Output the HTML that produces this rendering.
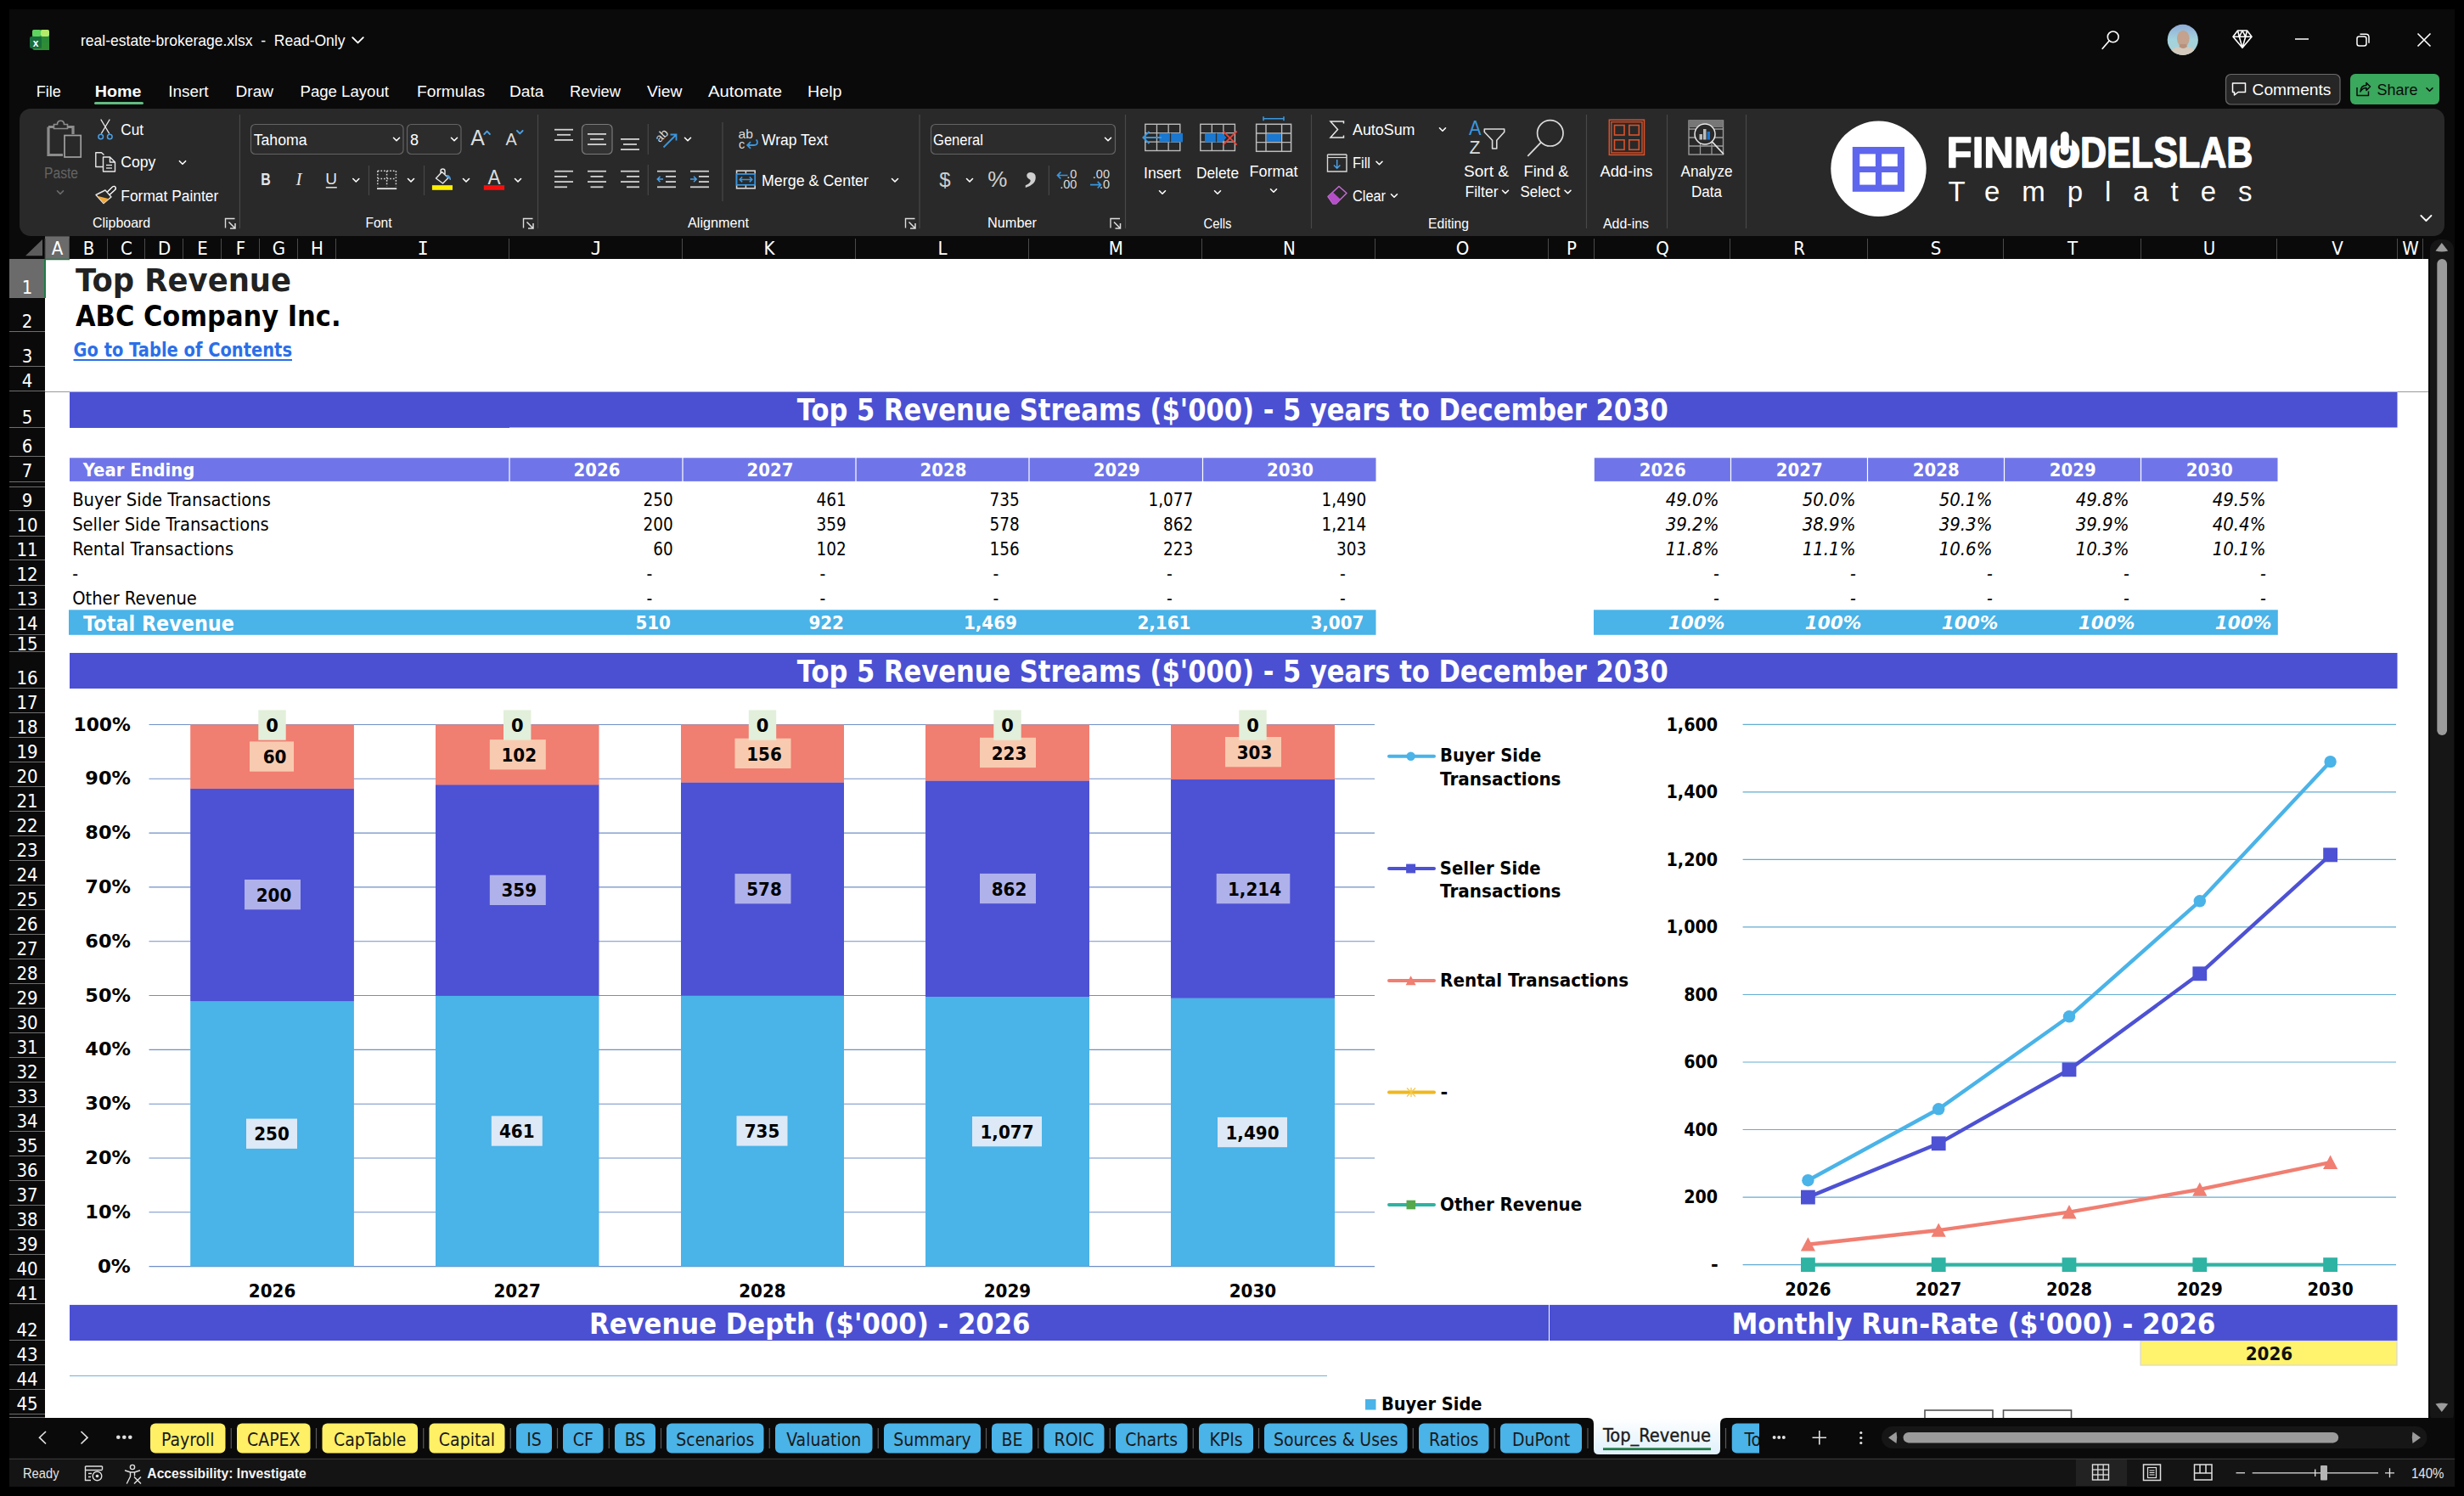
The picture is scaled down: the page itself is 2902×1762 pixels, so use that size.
<!DOCTYPE html>
<html lang="en"><head><meta charset="utf-8"><title>real-estate-brokerage.xlsx - Excel</title>
<style>
html,body{margin:0;padding:0;background:#000;width:2902px;height:1762px;overflow:hidden}
svg{display:block}
text{white-space:pre}
</style></head><body>
<svg width="2902" height="1762" viewBox="0 0 2902 1762">
<rect x="0" y="0" width="2902" height="1762" fill="#000"/>
<rect x="11" y="11" width="2880" height="1740" fill="#0a0a0a"/>
<g id="titlebar">
<rect x="38" y="35" width="20" height="24" fill="#2f8f3f" rx="3"/>
<rect x="38" y="35" width="10" height="8" fill="#5fd35f" rx="2"/>
<rect x="48" y="35" width="10" height="8" fill="#b5ea6a" rx="2"/>
<rect x="47" y="43" width="11" height="8" fill="#2a8a3a"/>
<rect x="47" y="51" width="11" height="8" fill="#2f8c35"/>
<rect x="35" y="43" width="14" height="14" fill="#176e3c" rx="2"/>
<text x="42" y="54.5" font-family='"Liberation Sans", sans-serif' font-size="12" fill="#fff" font-weight="700" text-anchor="middle">x</text>
<text x="95" y="54" font-family='"Liberation Sans", sans-serif' font-size="18.4" fill="#fff" textLength="311.5" lengthAdjust="spacingAndGlyphs">real-estate-brokerage.xlsx  -  Read-Only</text>
<path d="M415.2 44.15 L421.5 50.449999999999996 L427.8 44.15" fill="none" stroke="#fff" stroke-width="1.9" stroke-linecap="round" stroke-linejoin="round"/>
<circle cx="2488.7" cy="43.4" r="6.4" fill="none" stroke="#fff" stroke-width="1.6"/>
<line x1="2484" y1="48.3" x2="2476.2" y2="57.3" stroke="#fff" stroke-width="1.7" stroke-linecap="round"/>
<defs><linearGradient id="av" x1="0" y1="0" x2="0" y2="1"><stop offset="0" stop-color="#8fa9d6"/><stop offset="0.3" stop-color="#9cc3dc"/><stop offset="0.5" stop-color="#a3d3dc"/><stop offset="1" stop-color="#a9d2d6"/></linearGradient><clipPath id="avc"><circle cx="2570.8" cy="46.9" r="18.1"/></clipPath></defs>
<g clip-path="url(#avc)">
<rect x="2552" y="28" width="38" height="38" fill="url(#av)"/>
<path d="M2553 67 Q2556 57 2564.5 55.5 L2578 55.5 Q2586 57 2589 67 Z" fill="#d4c9bd"/>
<ellipse cx="2571.3" cy="45.5" rx="7.3" ry="9.8" fill="#c4a28d"/>
<path d="M2566.5 55 Q2571.3 59 2576 55 L2575 52 H2567.5 Z" fill="#b8917c"/>
</g>
<path d="M2630 43.3 L2635.5 36 L2646.5 36 L2652 43.3 L2641 56.3 Z M2630 43.3 L2652 43.3 M2635.5 36 L2637.3 43.3 L2641 56.3 L2644.7 43.3 L2646.5 36 M2637.3 43.3 L2641 36 L2644.7 43.3" fill="none" stroke="#fff" stroke-width="1.6" stroke-linejoin="round"/>
<line x1="2703" y1="46" x2="2719" y2="46" stroke="#fff" stroke-width="1.5" />
<rect x="2776" y="43" width="11" height="11" fill="none" rx="2.5" stroke="#fff" stroke-width="1.5"/>
<path d="M2779.5 40.2 H2786.5 Q2790 40.2 2790 43.7 V50.7" fill="none" stroke="#fff" stroke-width="1.5"/>
<path d="M2847.5 39.5 L2862.5 54.5 M2862.5 39.5 L2847.5 54.5" fill="none" stroke="#fff" stroke-width="1.6"/>
</g>
<g id="menu">
<text x="42.7" y="113.8" font-family='"Liberation Sans", sans-serif' font-size="18.7" fill="#fff" textLength="29.2" lengthAdjust="spacingAndGlyphs">File</text>
<text x="111.7" y="113.8" font-family='"Liberation Sans", sans-serif' font-size="18.7" fill="#fff" font-weight="700" textLength="54.7" lengthAdjust="spacingAndGlyphs">Home</text>
<text x="198.3" y="113.8" font-family='"Liberation Sans", sans-serif' font-size="18.7" fill="#fff" textLength="47.3" lengthAdjust="spacingAndGlyphs">Insert</text>
<text x="277.6" y="113.8" font-family='"Liberation Sans", sans-serif' font-size="18.7" fill="#fff" textLength="44.4" lengthAdjust="spacingAndGlyphs">Draw</text>
<text x="353.5" y="113.8" font-family='"Liberation Sans", sans-serif' font-size="18.7" fill="#fff" textLength="104.5" lengthAdjust="spacingAndGlyphs">Page Layout</text>
<text x="491" y="113.8" font-family='"Liberation Sans", sans-serif' font-size="18.7" fill="#fff" textLength="80" lengthAdjust="spacingAndGlyphs">Formulas</text>
<text x="600" y="113.8" font-family='"Liberation Sans", sans-serif' font-size="18.7" fill="#fff" textLength="40.5" lengthAdjust="spacingAndGlyphs">Data</text>
<text x="671" y="113.8" font-family='"Liberation Sans", sans-serif' font-size="18.7" fill="#fff" textLength="60" lengthAdjust="spacingAndGlyphs">Review</text>
<text x="762" y="113.8" font-family='"Liberation Sans", sans-serif' font-size="18.7" fill="#fff" textLength="41.5" lengthAdjust="spacingAndGlyphs">View</text>
<text x="834" y="113.8" font-family='"Liberation Sans", sans-serif' font-size="18.7" fill="#fff" textLength="87" lengthAdjust="spacingAndGlyphs">Automate</text>
<text x="951" y="113.8" font-family='"Liberation Sans", sans-serif' font-size="18.7" fill="#fff" textLength="40.5" lengthAdjust="spacingAndGlyphs">Help</text>
<rect x="111" y="120" width="58" height="3" fill="#62bb81" rx="1.5"/>
<rect x="2621.5" y="87.5" width="134.5" height="35.5" fill="#262626" rx="6" stroke="#6a6a6a" stroke-width="1.2"/>
<path d="M2629.5 98 H2644.5 V108.5 H2636 L2631.5 112 V108.5 H2629.5 Z" fill="none" stroke="#fff" stroke-width="1.5" stroke-linejoin="round"/>
<text x="2652.5" y="112" font-family='"Liberation Sans", sans-serif' font-size="18.7" fill="#fff" textLength="93" lengthAdjust="spacingAndGlyphs">Comments</text>
<rect x="2768" y="87" width="105" height="36" fill="#3aa85d" rx="6"/>
<path d="M2776 103 V112.5 H2789.5 V107.5 M2780 108 Q2780.5 100.5 2787 100.5 V97.5 L2791.5 102 L2787 106.5 V103.5 Q2782.5 103.5 2780 108Z" fill="none" stroke="#0c0c0c" stroke-width="1.5" stroke-linejoin="round"/>
<text x="2799.5" y="112" font-family='"Liberation Sans", sans-serif' font-size="18.7" fill="#0c0c0c" textLength="48" lengthAdjust="spacingAndGlyphs">Share</text>
<path d="M2858.0 103.75 L2861.5 107.25 L2865.0 103.75" fill="none" stroke="#0c0c0c" stroke-width="1.6" stroke-linecap="round" stroke-linejoin="round"/>
</g>
<g id="ribbon">
<rect x="23" y="128" width="2856" height="150" fill="#292929" rx="13"/>
<line x1="282.4" y1="135" x2="282.4" y2="269" stroke="#484848" stroke-width="1.2" />
<line x1="633.5" y1="135" x2="633.5" y2="269" stroke="#484848" stroke-width="1.2" />
<line x1="1083" y1="135" x2="1083" y2="269" stroke="#484848" stroke-width="1.2" />
<line x1="1325.5" y1="135" x2="1325.5" y2="269" stroke="#484848" stroke-width="1.2" />
<line x1="1544.5" y1="135" x2="1544.5" y2="269" stroke="#484848" stroke-width="1.2" />
<line x1="1868.5" y1="135" x2="1868.5" y2="269" stroke="#484848" stroke-width="1.2" />
<line x1="1963.5" y1="135" x2="1963.5" y2="269" stroke="#484848" stroke-width="1.2" />
<line x1="2056.5" y1="135" x2="2056.5" y2="269" stroke="#484848" stroke-width="1.2" />
<path d="M57 149.5 H63 M80 149.5 H86 V158 M57 149.5 V182.5 H74" fill="none" stroke="#8c8c8c" stroke-width="3.2" stroke-linejoin="miter"/>
<path d="M63.5 151.5 V146.5 H67.5 Q67.5 142.2 71.5 142.2 Q75.5 142.2 75.5 146.5 H79.5 V151.5 Z" fill="#292929" stroke="#8c8c8c" stroke-width="1.6"/>
<rect x="76" y="159.5" width="19.2" height="25.5" fill="#292929" stroke="#a0a0a0" stroke-width="1.7"/>
<text x="72" y="209.9" font-family='"Liberation Sans", sans-serif' font-size="18" fill="#646464" text-anchor="middle" textLength="40" lengthAdjust="spacingAndGlyphs">Paste</text>
<path d="M67.5 224.85 L71 228.35 L74.5 224.85" fill="none" stroke="#6a6a6a" stroke-width="1.6" stroke-linecap="round" stroke-linejoin="round"/>
<path d="M119 141 L128.5 157 M129 141 L119.5 157" fill="none" stroke="#e8e8e8" stroke-width="1.4" stroke-linecap="round"/>
<circle cx="118.7" cy="161" r="2.8" fill="none" stroke="#4aa0e6" stroke-width="1.5"/>
<circle cx="129.3" cy="161" r="2.8" fill="none" stroke="#4aa0e6" stroke-width="1.5"/>
<text x="142.3" y="159" font-family='"Liberation Sans", sans-serif' font-size="18" fill="#fff" textLength="26.7" lengthAdjust="spacingAndGlyphs">Cut</text>
<path d="M121 196.5 H112.8 V179.8 H119.5 L122.5 182.5" fill="none" stroke="#e8e8e8" stroke-width="1.4" stroke-linejoin="round"/>
<path d="M121.5 185 H129.5 L135.5 191 V202 H121.5 Z M129.5 185 V191 H135.5" fill="none" stroke="#e8e8e8" stroke-width="1.4" stroke-linejoin="round"/>
<line x1="125" y1="194.5" x2="132" y2="194.5" stroke="#e8e8e8" stroke-width="1.3" />
<line x1="125" y1="198" x2="132" y2="198" stroke="#e8e8e8" stroke-width="1.3" />
<text x="142.3" y="197.2" font-family='"Liberation Sans", sans-serif' font-size="18" fill="#fff" textLength="41.1" lengthAdjust="spacingAndGlyphs">Copy</text>
<path d="M211.4 189.7 L215 193.3 L218.6 189.7" fill="none" stroke="#fff" stroke-width="1.6" stroke-linecap="round" stroke-linejoin="round"/>
<path d="M113 229.5 L124 224 L131 232 L122 239.5 Z" fill="#292929" stroke="#e8e8e8" stroke-width="1.4" stroke-linejoin="round"/>
<path d="M114.5 230.8 L128.5 234.3 L122 239.3 Z" fill="#f2a93b"/>
<path d="M126.5 226 L132.5 220 Q135 218.5 136 220.5 Q137 222.5 135 224 L129 229.5" fill="none" stroke="#fff" stroke-width="1.4" stroke-linejoin="round"/>
<text x="142.3" y="236.7" font-family='"Liberation Sans", sans-serif' font-size="18" fill="#fff" textLength="115" lengthAdjust="spacingAndGlyphs">Format Painter</text>
<text x="109" y="267.8" font-family='"Liberation Sans", sans-serif' font-size="16.5" fill="#fff" textLength="68.2" lengthAdjust="spacingAndGlyphs">Clipboard</text>
<path d="M276.5 257.5 H265.5 V268.5" fill="none" stroke="#ddd" stroke-width="1.4"/>
<path d="M269.5 261.5 L276.5 268.5 M271.0 269.0 H277.0 V263.0" fill="none" stroke="#ddd" stroke-width="1.5"/>
<rect x="295.5" y="146.5" width="179.5" height="35" fill="#2c2c2c" rx="5" stroke="#646464" stroke-width="1.2"/>
<text x="298.7" y="171" font-family='"Liberation Sans", sans-serif' font-size="18" fill="#fff" textLength="62.8" lengthAdjust="spacingAndGlyphs">Tahoma</text>
<path d="M463.5 162.25 L467 165.75 L470.5 162.25" fill="none" stroke="#fff" stroke-width="1.6" stroke-linecap="round" stroke-linejoin="round"/>
<rect x="479.5" y="146.5" width="63.5" height="35" fill="#2c2c2c" rx="5" stroke="#646464" stroke-width="1.2"/>
<text x="483" y="171" font-family='"Liberation Sans", sans-serif' font-size="18" fill="#fff">8</text>
<path d="M531.5 162.25 L535 165.75 L538.5 162.25" fill="none" stroke="#fff" stroke-width="1.6" stroke-linecap="round" stroke-linejoin="round"/>
<text x="554.2" y="171.4" font-family='"Liberation Sans", sans-serif' font-size="26" fill="#dcdcdc" textLength="16.6" lengthAdjust="spacingAndGlyphs">A</text>
<path d="M570.3 158 L573.6 154.6 L576.9 158" fill="none" stroke="#4aa0e6" stroke-width="1.9" stroke-linecap="round" stroke-linejoin="round"/>
<text x="595.6" y="171.4" font-family='"Liberation Sans", sans-serif' font-size="20.5" fill="#dcdcdc" textLength="13.2" lengthAdjust="spacingAndGlyphs">A</text>
<path d="M609 154 L612.3 157.3 L615.6 154" fill="none" stroke="#4aa0e6" stroke-width="1.9" stroke-linecap="round" stroke-linejoin="round"/>
<text x="313" y="217.7" font-family='"Liberation Sans", sans-serif' font-size="19.5" fill="#e4e4e4" font-weight="700" text-anchor="middle" textLength="11.5" lengthAdjust="spacingAndGlyphs">B</text>
<text x="352" y="217.7" font-family='"Liberation Serif", serif' font-size="21" fill="#e4e4e4" text-anchor="middle" font-style="italic">I</text>
<text x="390.2" y="216.8" font-family='"Liberation Sans", sans-serif' font-size="19" fill="#e4e4e4" text-anchor="middle">U</text>
<line x1="383.8" y1="220.8" x2="396.8" y2="220.8" stroke="#e4e4e4" stroke-width="1.5" />
<path d="M415.8 210.55 L419.3 214.05 L422.8 210.55" fill="none" stroke="#fff" stroke-width="1.6" stroke-linecap="round" stroke-linejoin="round"/>
<line x1="434.5" y1="195" x2="434.5" y2="230" stroke="#484848" stroke-width="1.2" />
<path d="M444.8 201.2 H466.4 M444.8 201.2 V219.5 M466.4 201.2 V219.5 M455.6 201.2 V219.5 M444.8 210.6 H466.4" fill="none" stroke="#d4d4d4" stroke-width="1.5" stroke-dasharray="1.7 1.9"/>
<line x1="444" y1="222.2" x2="467.2" y2="222.2" stroke="#e8e8e8" stroke-width="1.8" />
<path d="M480.5 210.55 L484 214.05 L487.5 210.55" fill="none" stroke="#fff" stroke-width="1.6" stroke-linecap="round" stroke-linejoin="round"/>
<line x1="499.5" y1="195" x2="499.5" y2="230" stroke="#484848" stroke-width="1.2" />
<path d="M513.5 210 L520.5 202.5 L528 209.5 L521.5 216 Z M519 204 V201.5 Q519 199 521.5 199 Q524 199 524 201.5 V206" fill="none" stroke="#e4e4e4" stroke-width="1.5" stroke-linejoin="round"/>
<path d="M526 206.5 Q530.5 206 530.5 212 Q529 208.5 526 208.5Z" fill="#4aa0e6" stroke="#4aa0e6" stroke-width="1"/>
<rect x="508.9" y="218.2" width="24.1" height="5.6" fill="#fff000"/>
<path d="M545.5 210.55 L549 214.05 L552.5 210.55" fill="none" stroke="#fff" stroke-width="1.6" stroke-linecap="round" stroke-linejoin="round"/>
<text x="582" y="217.3" font-family='"Liberation Sans", sans-serif' font-size="24" fill="#dcdcdc" text-anchor="middle" textLength="15" lengthAdjust="spacingAndGlyphs">A</text>
<rect x="569.8" y="218.2" width="24.3" height="5.6" fill="#f40f0f"/>
<path d="M606.5 210.55 L610 214.05 L613.5 210.55" fill="none" stroke="#fff" stroke-width="1.6" stroke-linecap="round" stroke-linejoin="round"/>
<text x="430.5" y="267.8" font-family='"Liberation Sans", sans-serif' font-size="16.5" fill="#fff" textLength="31" lengthAdjust="spacingAndGlyphs">Font</text>
<path d="M627.5 257.5 H616.5 V268.5" fill="none" stroke="#ddd" stroke-width="1.4"/>
<path d="M620.5 261.5 L627.5 268.5 M622.0 269.0 H628.0 V263.0" fill="none" stroke="#ddd" stroke-width="1.5"/>
<line x1="653.0" y1="152.7" x2="675.0" y2="152.7" stroke="#d2d2d2" stroke-width="1.8" />
<line x1="656.0" y1="158.8" x2="672.0" y2="158.8" stroke="#d2d2d2" stroke-width="1.8" />
<line x1="653.0" y1="164.9" x2="675.0" y2="164.9" stroke="#d2d2d2" stroke-width="1.8" />
<rect x="685.5" y="146.5" width="35.5" height="35" fill="#333" rx="5" stroke="#7a7a7a" stroke-width="1.2"/>
<line x1="692.0" y1="157.9" x2="714.0" y2="157.9" stroke="#d2d2d2" stroke-width="1.8" />
<line x1="695.0" y1="164.0" x2="711.0" y2="164.0" stroke="#d2d2d2" stroke-width="1.8" />
<line x1="692.0" y1="170.1" x2="714.0" y2="170.1" stroke="#d2d2d2" stroke-width="1.8" />
<line x1="731.0" y1="163.9" x2="753.0" y2="163.9" stroke="#d2d2d2" stroke-width="1.8" />
<line x1="734.0" y1="170.0" x2="750.0" y2="170.0" stroke="#d2d2d2" stroke-width="1.8" />
<line x1="731.0" y1="176.1" x2="753.0" y2="176.1" stroke="#d2d2d2" stroke-width="1.8" />
<line x1="763.3" y1="146" x2="763.3" y2="182" stroke="#484848" stroke-width="1.2" />
<text x="771.5" y="164.5" font-family='"Liberation Sans", sans-serif' font-size="14" fill="#dcdcdc" transform="rotate(-45 779 160)">ab</text>
<path d="M781.5 173.5 L796 159 M789.5 158.5 H796.5 V165.5" fill="none" stroke="#3a96dd" stroke-width="1.8"/>
<path d="M806.5 162.25 L810 165.75 L813.5 162.25" fill="none" stroke="#fff" stroke-width="1.6" stroke-linecap="round" stroke-linejoin="round"/>
<line x1="653.0" y1="201.7" x2="675.0" y2="201.7" stroke="#d2d2d2" stroke-width="1.8" />
<line x1="653.0" y1="207.9" x2="668.0" y2="207.9" stroke="#d2d2d2" stroke-width="1.8" />
<line x1="653.0" y1="214.1" x2="675.0" y2="214.1" stroke="#d2d2d2" stroke-width="1.8" />
<line x1="653.0" y1="220.3" x2="668.0" y2="220.3" stroke="#d2d2d2" stroke-width="1.8" />
<line x1="692.0" y1="201.7" x2="714.0" y2="201.7" stroke="#d2d2d2" stroke-width="1.8" />
<line x1="695.5" y1="207.9" x2="710.5" y2="207.9" stroke="#d2d2d2" stroke-width="1.8" />
<line x1="692.0" y1="214.1" x2="714.0" y2="214.1" stroke="#d2d2d2" stroke-width="1.8" />
<line x1="695.5" y1="220.3" x2="710.5" y2="220.3" stroke="#d2d2d2" stroke-width="1.8" />
<line x1="731.0" y1="201.7" x2="753.0" y2="201.7" stroke="#d2d2d2" stroke-width="1.8" />
<line x1="738.0" y1="207.9" x2="753.0" y2="207.9" stroke="#d2d2d2" stroke-width="1.8" />
<line x1="731.0" y1="214.1" x2="753.0" y2="214.1" stroke="#d2d2d2" stroke-width="1.8" />
<line x1="738.0" y1="220.3" x2="753.0" y2="220.3" stroke="#d2d2d2" stroke-width="1.8" />
<line x1="763.3" y1="194" x2="763.3" y2="230" stroke="#484848" stroke-width="1.2" />
<line x1="774.0" y1="201.7" x2="796.0" y2="201.7" stroke="#d2d2d2" stroke-width="1.8" />
<line x1="784.0" y1="207.9" x2="796.0" y2="207.9" stroke="#d2d2d2" stroke-width="1.8" />
<line x1="784.0" y1="214.1" x2="796.0" y2="214.1" stroke="#d2d2d2" stroke-width="1.8" />
<line x1="774.0" y1="220.3" x2="796.0" y2="220.3" stroke="#d2d2d2" stroke-width="1.8" />
<path d="M781 211 H774.5 M777.5 207.8 L774.3 211 L777.5 214.2" fill="none" stroke="#4aa0e6" stroke-width="1.5"/>
<line x1="813.0" y1="201.7" x2="835.0" y2="201.7" stroke="#d2d2d2" stroke-width="1.8" />
<line x1="823.0" y1="207.9" x2="835.0" y2="207.9" stroke="#d2d2d2" stroke-width="1.8" />
<line x1="823.0" y1="214.1" x2="835.0" y2="214.1" stroke="#d2d2d2" stroke-width="1.8" />
<line x1="813.0" y1="220.3" x2="835.0" y2="220.3" stroke="#d2d2d2" stroke-width="1.8" />
<path d="M813 211 H820 M817 207.8 L820.2 211 L817 214.2" fill="none" stroke="#4aa0e6" stroke-width="1.5"/>
<line x1="851" y1="144" x2="851" y2="237" stroke="#484848" stroke-width="1.2" />
<text x="869.5" y="163" font-family='"Liberation Sans", sans-serif' font-size="14.5" fill="#dcdcdc" textLength="17.5" lengthAdjust="spacingAndGlyphs">ab</text>
<text x="870" y="175" font-family='"Liberation Sans", sans-serif' font-size="14.5" fill="#dcdcdc">c</text>
<path d="M880.5 171 H888 Q892 171 892 167.5 Q892 165.5 890.5 164.5 M884 167.2 L880.2 171 L884 174.8" fill="none" stroke="#3a96dd" stroke-width="1.8"/>
<text x="897" y="170.5" font-family='"Liberation Sans", sans-serif' font-size="18" fill="#fff" textLength="78" lengthAdjust="spacingAndGlyphs">Wrap Text</text>
<rect x="867.6" y="201.2" width="21.6" height="20.6" fill="none" stroke="#d8d8d8" stroke-width="1.6"/>
<line x1="878.4" y1="201" x2="878.4" y2="205" stroke="#d8d8d8" stroke-width="1.5" />
<line x1="878.4" y1="218" x2="878.4" y2="222" stroke="#d8d8d8" stroke-width="1.5" />
<rect x="867.6" y="205" width="21.6" height="12.8" fill="#292929" stroke="#3a96dd" stroke-width="1.7"/>
<path d="M871.3 211.4 H885.7 M874.2 208.4 L871.2 211.4 L874.2 214.4 M882.8 208.4 L885.8 211.4 L882.8 214.4" fill="none" stroke="#3a96dd" stroke-width="1.5"/>
<text x="897" y="218.5" font-family='"Liberation Sans", sans-serif' font-size="18" fill="#fff" textLength="126" lengthAdjust="spacingAndGlyphs">Merge &amp; Center</text>
<path d="M1050.5 210.55 L1054 214.05 L1057.5 210.55" fill="none" stroke="#fff" stroke-width="1.6" stroke-linecap="round" stroke-linejoin="round"/>
<text x="810" y="267.8" font-family='"Liberation Sans", sans-serif' font-size="16.5" fill="#fff" textLength="72" lengthAdjust="spacingAndGlyphs">Alignment</text>
<path d="M1077.5 257.5 H1066.5 V268.5" fill="none" stroke="#ddd" stroke-width="1.4"/>
<path d="M1070.5 261.5 L1077.5 268.5 M1072.0 269.0 H1078.0 V263.0" fill="none" stroke="#ddd" stroke-width="1.5"/>
<rect x="1096.5" y="146.5" width="217" height="35" fill="#2c2c2c" rx="5" stroke="#646464" stroke-width="1.2"/>
<text x="1099" y="171" font-family='"Liberation Sans", sans-serif' font-size="18" fill="#fff" textLength="59" lengthAdjust="spacingAndGlyphs">General</text>
<path d="M1301.5 162.25 L1305 165.75 L1308.5 162.25" fill="none" stroke="#fff" stroke-width="1.6" stroke-linecap="round" stroke-linejoin="round"/>
<text x="1113" y="220" font-family='"Liberation Sans", sans-serif' font-size="24" fill="#cfcfcf" text-anchor="middle">$</text>
<path d="M1138.5 210.55 L1142 214.05 L1145.5 210.55" fill="none" stroke="#fff" stroke-width="1.6" stroke-linecap="round" stroke-linejoin="round"/>
<text x="1174.8" y="220" font-family='"Liberation Sans", sans-serif' font-size="26" fill="#cfcfcf" text-anchor="middle">%</text>
<text x="1214.5" y="211.5" font-family='"Liberation Serif", serif' font-size="60" fill="#cfcfcf" font-weight="700" text-anchor="middle">,</text>
<line x1="1235.4" y1="195" x2="1235.4" y2="230" stroke="#484848" stroke-width="1.2" />
<text x="1268.3" y="210" font-family='"Liberation Sans", sans-serif' font-size="14.5" fill="#dcdcdc" text-anchor="end">.0</text>
<text x="1268.3" y="221.8" font-family='"Liberation Sans", sans-serif' font-size="14.5" fill="#dcdcdc" text-anchor="end">.00</text>
<path d="M1245.5 206.5 H1257.5 M1249.3 202.7 L1245.5 206.5 L1249.3 210.3" fill="none" stroke="#3a96dd" stroke-width="1.7"/>
<text x="1307" y="210" font-family='"Liberation Sans", sans-serif' font-size="14.5" fill="#dcdcdc" text-anchor="end">.00</text>
<text x="1307" y="221.8" font-family='"Liberation Sans", sans-serif' font-size="14.5" fill="#dcdcdc" text-anchor="end">.0</text>
<path d="M1284 217.7 H1296.5 M1292.7 213.9 L1296.5 217.7 L1292.7 221.5" fill="none" stroke="#3a96dd" stroke-width="1.7"/>
<text x="1163" y="267.8" font-family='"Liberation Sans", sans-serif' font-size="16.5" fill="#fff" textLength="58" lengthAdjust="spacingAndGlyphs">Number</text>
<path d="M1319 257.5 H1308 V268.5" fill="none" stroke="#ddd" stroke-width="1.4"/>
<path d="M1312 261.5 L1319 268.5 M1313.5 269.0 H1319.5 V263.0" fill="none" stroke="#ddd" stroke-width="1.5"/>
<rect x="1348.8" y="146.3" width="41" height="31.2" fill="none" stroke="#bdbdbd" stroke-width="1.4"/>
<line x1="1362.4666666666667" y1="146.3" x2="1362.4666666666667" y2="177.5" stroke="#bdbdbd" stroke-width="1.3" />
<line x1="1376.1333333333332" y1="146.3" x2="1376.1333333333332" y2="177.5" stroke="#bdbdbd" stroke-width="1.3" />
<line x1="1348.8" y1="156.70000000000002" x2="1389.8" y2="156.70000000000002" stroke="#bdbdbd" stroke-width="1.3" />
<line x1="1348.8" y1="167.10000000000002" x2="1389.8" y2="167.10000000000002" stroke="#bdbdbd" stroke-width="1.3" />
<rect x="1365.4" y="156.8" width="27.6" height="10.6" fill="#1a78d0"/>
<line x1="1378.5" y1="156.8" x2="1378.5" y2="167.4" stroke="#292929" stroke-width="1.3" />
<path d="M1368 162 H1346.5 M1353.5 155 L1346.3 162 L1353.5 169" fill="none" stroke="#3a96dd" stroke-width="1.8"/>
<text x="1369" y="210" font-family='"Liberation Sans", sans-serif' font-size="18" fill="#fff" text-anchor="middle" textLength="44" lengthAdjust="spacingAndGlyphs">Insert</text>
<path d="M1365.5 224.75 L1369 228.25 L1372.5 224.75" fill="none" stroke="#fff" stroke-width="1.6" stroke-linecap="round" stroke-linejoin="round"/>
<rect x="1413.8" y="146.3" width="40.6" height="31.2" fill="none" stroke="#bdbdbd" stroke-width="1.4"/>
<line x1="1427.3333333333333" y1="146.3" x2="1427.3333333333333" y2="177.5" stroke="#bdbdbd" stroke-width="1.3" />
<line x1="1440.8666666666666" y1="146.3" x2="1440.8666666666666" y2="177.5" stroke="#bdbdbd" stroke-width="1.3" />
<line x1="1413.8" y1="156.70000000000002" x2="1454.3999999999999" y2="156.70000000000002" stroke="#bdbdbd" stroke-width="1.3" />
<line x1="1413.8" y1="167.10000000000002" x2="1454.3999999999999" y2="167.10000000000002" stroke="#bdbdbd" stroke-width="1.3" />
<path d="M1419 156.8 H1439.5 L1444.5 162.1 L1439.5 167.4 H1419 Z" fill="#1a78d0"/>
<line x1="1432.5" y1="156.8" x2="1432.5" y2="167.4" stroke="#292929" stroke-width="1.3" />
<path d="M1440.5 154.5 L1456.7 170.7 M1456.7 154.5 L1440.5 170.7" fill="none" stroke="#e5443a" stroke-width="1.9"/>
<text x="1434" y="210" font-family='"Liberation Sans", sans-serif' font-size="18" fill="#fff" text-anchor="middle" textLength="50" lengthAdjust="spacingAndGlyphs">Delete</text>
<path d="M1430.5 224.75 L1434 228.25 L1437.5 224.75" fill="none" stroke="#fff" stroke-width="1.6" stroke-linecap="round" stroke-linejoin="round"/>
<rect x="1479.6" y="146.3" width="41" height="32" fill="none" stroke="#bdbdbd" stroke-width="1.5"/>
<line x1="1491" y1="146.3" x2="1491" y2="178.3" stroke="#bdbdbd" stroke-width="1.4" />
<line x1="1509.6" y1="146.3" x2="1509.6" y2="178.3" stroke="#bdbdbd" stroke-width="1.4" />
<line x1="1479.6" y1="157" x2="1520.6" y2="157" stroke="#bdbdbd" stroke-width="1.4" />
<line x1="1479.6" y1="167.6" x2="1520.6" y2="167.6" stroke="#bdbdbd" stroke-width="1.4" />
<rect x="1491.8" y="157.7" width="17" height="9.2" fill="#1a78d0"/>
<path d="M1488 139.8 H1512 M1488 137.3 V142.3 M1512 137.3 V142.3" fill="none" stroke="#3a96dd" stroke-width="1.6"/>
<text x="1500" y="208" font-family='"Liberation Sans", sans-serif' font-size="18" fill="#fff" text-anchor="middle" textLength="57" lengthAdjust="spacingAndGlyphs">Format</text>
<path d="M1496.5 222.75 L1500 226.25 L1503.5 222.75" fill="none" stroke="#fff" stroke-width="1.6" stroke-linecap="round" stroke-linejoin="round"/>
<text x="1417.5" y="268.5" font-family='"Liberation Sans", sans-serif' font-size="16.5" fill="#fff" textLength="33" lengthAdjust="spacingAndGlyphs">Cells</text>
<path d="M1582.5 145.5 V143 H1567 L1575.5 152.5 L1567 162 H1582.5 V159.5" fill="none" stroke="#e8e8e8" stroke-width="1.5" stroke-linejoin="miter"/>
<text x="1593" y="159" font-family='"Liberation Sans", sans-serif' font-size="18" fill="#fff" textLength="73.5" lengthAdjust="spacingAndGlyphs">AutoSum</text>
<path d="M1695.5 150.75 L1699 154.25 L1702.5 150.75" fill="none" stroke="#fff" stroke-width="1.6" stroke-linecap="round" stroke-linejoin="round"/>
<path d="M1563.5 182 H1586 M1563.5 182 V202 H1586 V182" fill="none" stroke="#d8d8d8" stroke-width="1.4"/>
<line x1="1563.5" y1="185.5" x2="1586" y2="185.5" stroke="#d8d8d8" stroke-width="1.2" />
<path d="M1574.7 188 V198 M1571 194.5 L1574.7 198.2 L1578.4 194.5" fill="none" stroke="#4aa0e6" stroke-width="1.5"/>
<text x="1593" y="198" font-family='"Liberation Sans", sans-serif' font-size="18" fill="#fff" textLength="21" lengthAdjust="spacingAndGlyphs">Fill</text>
<path d="M1621.0 190.25 L1624.5 193.75 L1628.0 190.25" fill="none" stroke="#fff" stroke-width="1.6" stroke-linecap="round" stroke-linejoin="round"/>
<path d="M1564 231.5 L1577 219.5 L1586 227.5 L1573.5 240 H1570 Z" fill="none" stroke="#c66bd6" stroke-width="1.5" stroke-linejoin="round"/>
<path d="M1564.5 231.5 L1570 226.5 L1579 235 L1573.5 240 H1570 Z" fill="#b44fc8"/>
<text x="1593" y="237" font-family='"Liberation Sans", sans-serif' font-size="18" fill="#fff" textLength="39" lengthAdjust="spacingAndGlyphs">Clear</text>
<path d="M1638.5 228.75 L1642 232.25 L1645.5 228.75" fill="none" stroke="#fff" stroke-width="1.6" stroke-linecap="round" stroke-linejoin="round"/>
<text x="1730" y="159" font-family='"Liberation Sans", sans-serif' font-size="23" fill="#3a96dd" textLength="14.5" lengthAdjust="spacingAndGlyphs">A</text>
<text x="1730.5" y="181" font-family='"Liberation Sans", sans-serif' font-size="22.5" fill="#dcdcdc" textLength="13" lengthAdjust="spacingAndGlyphs">Z</text>
<path d="M1748.3 152 H1771.7 V155.5 L1762.8 165.3 V175 H1757.6 V165.3 L1748.3 155.5 Z" fill="none" stroke="#dcdcdc" stroke-width="1.6" stroke-linejoin="round"/>
<text x="1750.5" y="208" font-family='"Liberation Sans", sans-serif' font-size="18" fill="#fff" text-anchor="middle" textLength="53" lengthAdjust="spacingAndGlyphs">Sort &amp;</text>
<text x="1745" y="232" font-family='"Liberation Sans", sans-serif' font-size="18" fill="#fff" text-anchor="middle" textLength="39" lengthAdjust="spacingAndGlyphs">Filter</text>
<path d="M1769.5 224.25 L1773 227.75 L1776.5 224.25" fill="none" stroke="#fff" stroke-width="1.6" stroke-linecap="round" stroke-linejoin="round"/>
<circle cx="1825.8" cy="156.8" r="15.2" fill="none" stroke="#dcdcdc" stroke-width="1.7"/>
<line x1="1815" y1="167.6" x2="1799.3" y2="183.8" stroke="#dcdcdc" stroke-width="1.8" />
<text x="1821" y="208" font-family='"Liberation Sans", sans-serif' font-size="18" fill="#fff" text-anchor="middle" textLength="53" lengthAdjust="spacingAndGlyphs">Find &amp;</text>
<text x="1814" y="232" font-family='"Liberation Sans", sans-serif' font-size="18" fill="#fff" text-anchor="middle" textLength="47" lengthAdjust="spacingAndGlyphs">Select</text>
<path d="M1843.0 224.25 L1846.5 227.75 L1850.0 224.25" fill="none" stroke="#fff" stroke-width="1.6" stroke-linecap="round" stroke-linejoin="round"/>
<text x="1682" y="268.5" font-family='"Liberation Sans", sans-serif' font-size="16.5" fill="#fff" textLength="48" lengthAdjust="spacingAndGlyphs">Editing</text>
<rect x="1895.3" y="141.2" width="41.2" height="41.2" fill="none" stroke="#d9532c" stroke-width="1.5"/>
<rect x="1897.8" y="143.7" width="36.2" height="36.2" fill="none" stroke="#d9532c" stroke-width="1.3"/>
<rect x="1901.5" y="147.5" width="11.5" height="11.5" fill="none" stroke="#d9532c" stroke-width="1.6"/>
<rect x="1918.8" y="147.5" width="11.5" height="11.5" fill="none" stroke="#d9532c" stroke-width="1.6"/>
<rect x="1901.5" y="164.8" width="11.5" height="11.5" fill="none" stroke="#d9532c" stroke-width="1.6"/>
<rect x="1918.8" y="164.8" width="11.5" height="11.5" fill="none" stroke="#d9532c" stroke-width="1.6"/>
<text x="1915.5" y="208" font-family='"Liberation Sans", sans-serif' font-size="18" fill="#fff" text-anchor="middle" textLength="62" lengthAdjust="spacingAndGlyphs">Add-ins</text>
<text x="1888" y="268.5" font-family='"Liberation Sans", sans-serif' font-size="16.5" fill="#fff" textLength="54" lengthAdjust="spacingAndGlyphs">Add-ins</text>
<rect x="1989" y="142" width="40.5" height="40" fill="none" stroke="#9a9a9a" stroke-width="1.4"/>
<line x1="2002.5" y1="142" x2="2002.5" y2="182" stroke="#9a9a9a" stroke-width="1.3" />
<line x1="2016.0" y1="142" x2="2016.0" y2="182" stroke="#9a9a9a" stroke-width="1.3" />
<line x1="1989" y1="152.0" x2="2029.5" y2="152.0" stroke="#9a9a9a" stroke-width="1.3" />
<line x1="1989" y1="162.0" x2="2029.5" y2="162.0" stroke="#9a9a9a" stroke-width="1.3" />
<line x1="1989" y1="172.0" x2="2029.5" y2="172.0" stroke="#9a9a9a" stroke-width="1.3" />
<rect x="1989" y="142" width="40.5" height="8" fill="#777"/>
<circle cx="2008" cy="158" r="12" fill="#292929" stroke="#e8e8e8" stroke-width="1.5"/>
<rect x="2001.5" y="158" width="3.5" height="6.5" fill="#bbb"/>
<rect x="2006" y="152" width="3.5" height="12.5" fill="#bbb"/>
<rect x="2010.5" y="155" width="3.5" height="9.5" fill="#1976d2"/>
<line x1="2016.5" y1="167" x2="2030" y2="181.5" stroke="#e8e8e8" stroke-width="1.8" />
<text x="2010" y="208" font-family='"Liberation Sans", sans-serif' font-size="18" fill="#fff" text-anchor="middle" textLength="61" lengthAdjust="spacingAndGlyphs">Analyze</text>
<text x="2010" y="232" font-family='"Liberation Sans", sans-serif' font-size="18" fill="#fff" text-anchor="middle" textLength="36" lengthAdjust="spacingAndGlyphs">Data</text>
<circle cx="2212.5" cy="198.8" r="56.2" fill="#fff"/>
<rect x="2181.8" y="173" width="61.2" height="52.8" fill="#5e66ee"/>
<rect x="2190.3" y="181.4" width="18.6" height="14.6" fill="#fff"/>
<rect x="2216.2" y="181.4" width="18.6" height="14.6" fill="#fff"/>
<rect x="2190.3" y="203" width="18.6" height="14.6" fill="#fff"/>
<rect x="2216.2" y="203" width="18.6" height="14.6" fill="#fff"/>
<text font-family='"Liberation Sans", sans-serif' font-weight="700" fill="#fff" stroke="#fff" stroke-linejoin="round"><tspan x="2292.6" y="196.8" font-size="49.5" stroke-width="1.3" textLength="120.4" lengthAdjust="spacingAndGlyphs">FINM</tspan><tspan x="2431.8" y="195.8" font-size="44" stroke-width="4" text-anchor="middle">O</tspan><tspan x="2450" y="196.8" font-size="49.5" stroke-width="1.3" textLength="203.4" lengthAdjust="spacingAndGlyphs">DELSLAB</tspan></text>
<rect x="2423.4" y="150" width="16.8" height="21.5" fill="#292929"/>
<rect x="2426.9" y="155" width="9.8" height="27.5" fill="#fff" rx="4.9"/>
<text x="2294.5" y="237" font-family='"Liberation Sans", sans-serif' font-size="33" fill="#fff" textLength="358" lengthAdjust="spacing">Templates</text>
<path d="M2851.4 254.0 L2857.4 260.0 L2863.4 254.0" fill="none" stroke="#fff" stroke-width="1.8" stroke-linecap="round" stroke-linejoin="round"/>
</g>
<g id="sheet">
<rect x="11" y="279" width="2849" height="26" fill="#0a0a0a"/>
<rect x="53" y="278.3" width="28.8" height="26.7" fill="#6b6b6b"/>
<text x="67.5" y="300" font-family='"DejaVu Sans Condensed", "DejaVu Sans", sans-serif' font-size="22" fill="#fff" text-anchor="middle">A</text>
<line x1="81.5" y1="281" x2="81.5" y2="305" stroke="#4a4a4a" stroke-width="1" />
<text x="104.5" y="300" font-family='"DejaVu Sans Condensed", "DejaVu Sans", sans-serif' font-size="22" fill="#fff" text-anchor="middle">B</text>
<line x1="126.5" y1="281" x2="126.5" y2="305" stroke="#4a4a4a" stroke-width="1" />
<text x="149.0" y="300" font-family='"DejaVu Sans Condensed", "DejaVu Sans", sans-serif' font-size="22" fill="#fff" text-anchor="middle">C</text>
<line x1="170.5" y1="281" x2="170.5" y2="305" stroke="#4a4a4a" stroke-width="1" />
<text x="193.5" y="300" font-family='"DejaVu Sans Condensed", "DejaVu Sans", sans-serif' font-size="22" fill="#fff" text-anchor="middle">D</text>
<line x1="215.5" y1="281" x2="215.5" y2="305" stroke="#4a4a4a" stroke-width="1" />
<text x="238.5" y="300" font-family='"DejaVu Sans Condensed", "DejaVu Sans", sans-serif' font-size="22" fill="#fff" text-anchor="middle">E</text>
<line x1="260.5" y1="281" x2="260.5" y2="305" stroke="#4a4a4a" stroke-width="1" />
<text x="283.5" y="300" font-family='"DejaVu Sans Condensed", "DejaVu Sans", sans-serif' font-size="22" fill="#fff" text-anchor="middle">F</text>
<line x1="305.5" y1="281" x2="305.5" y2="305" stroke="#4a4a4a" stroke-width="1" />
<text x="328.5" y="300" font-family='"DejaVu Sans Condensed", "DejaVu Sans", sans-serif' font-size="22" fill="#fff" text-anchor="middle">G</text>
<line x1="350.5" y1="281" x2="350.5" y2="305" stroke="#4a4a4a" stroke-width="1" />
<text x="373.5" y="300" font-family='"DejaVu Sans Condensed", "DejaVu Sans", sans-serif' font-size="22" fill="#fff" text-anchor="middle">H</text>
<line x1="395.5" y1="281" x2="395.5" y2="305" stroke="#4a4a4a" stroke-width="1" />
<text x="498.0" y="300" font-family='"DejaVu Sans Mono", monospace' font-size="22" fill="#fff" text-anchor="middle">I</text>
<line x1="599.5" y1="281" x2="599.5" y2="305" stroke="#4a4a4a" stroke-width="1" />
<text x="702.0" y="300" font-family='"DejaVu Sans Mono", monospace' font-size="22" fill="#fff" text-anchor="middle">J</text>
<line x1="803.5" y1="281" x2="803.5" y2="305" stroke="#4a4a4a" stroke-width="1" />
<text x="906.0" y="300" font-family='"DejaVu Sans Condensed", "DejaVu Sans", sans-serif' font-size="22" fill="#fff" text-anchor="middle">K</text>
<line x1="1007.5" y1="281" x2="1007.5" y2="305" stroke="#4a4a4a" stroke-width="1" />
<text x="1110.0" y="300" font-family='"DejaVu Sans Condensed", "DejaVu Sans", sans-serif' font-size="22" fill="#fff" text-anchor="middle">L</text>
<line x1="1211.5" y1="281" x2="1211.5" y2="305" stroke="#4a4a4a" stroke-width="1" />
<text x="1314.25" y="300" font-family='"DejaVu Sans Condensed", "DejaVu Sans", sans-serif' font-size="22" fill="#fff" text-anchor="middle">M</text>
<line x1="1415.5" y1="281" x2="1415.5" y2="305" stroke="#4a4a4a" stroke-width="1" />
<text x="1518.5" y="300" font-family='"DejaVu Sans Condensed", "DejaVu Sans", sans-serif' font-size="22" fill="#fff" text-anchor="middle">N</text>
<line x1="1619.5" y1="281" x2="1619.5" y2="305" stroke="#4a4a4a" stroke-width="1" />
<text x="1722.5" y="300" font-family='"DejaVu Sans Condensed", "DejaVu Sans", sans-serif' font-size="22" fill="#fff" text-anchor="middle">O</text>
<line x1="1823.5" y1="281" x2="1823.5" y2="305" stroke="#4a4a4a" stroke-width="1" />
<text x="1851.0" y="300" font-family='"DejaVu Sans Condensed", "DejaVu Sans", sans-serif' font-size="22" fill="#fff" text-anchor="middle">P</text>
<line x1="1877.5" y1="281" x2="1877.5" y2="305" stroke="#4a4a4a" stroke-width="1" />
<text x="1958.0" y="300" font-family='"DejaVu Sans Condensed", "DejaVu Sans", sans-serif' font-size="22" fill="#fff" text-anchor="middle">Q</text>
<line x1="2037.5" y1="281" x2="2037.5" y2="305" stroke="#4a4a4a" stroke-width="1" />
<text x="2119.0" y="300" font-family='"DejaVu Sans Condensed", "DejaVu Sans", sans-serif' font-size="22" fill="#fff" text-anchor="middle">R</text>
<line x1="2199.5" y1="281" x2="2199.5" y2="305" stroke="#4a4a4a" stroke-width="1" />
<text x="2280.0" y="300" font-family='"DejaVu Sans Condensed", "DejaVu Sans", sans-serif' font-size="22" fill="#fff" text-anchor="middle">S</text>
<line x1="2359.5" y1="281" x2="2359.5" y2="305" stroke="#4a4a4a" stroke-width="1" />
<text x="2441.0" y="300" font-family='"DejaVu Sans Condensed", "DejaVu Sans", sans-serif' font-size="22" fill="#fff" text-anchor="middle">T</text>
<line x1="2521.5" y1="281" x2="2521.5" y2="305" stroke="#4a4a4a" stroke-width="1" />
<text x="2602.0" y="300" font-family='"DejaVu Sans Condensed", "DejaVu Sans", sans-serif' font-size="22" fill="#fff" text-anchor="middle">U</text>
<line x1="2681.5" y1="281" x2="2681.5" y2="305" stroke="#4a4a4a" stroke-width="1" />
<text x="2753.0" y="300" font-family='"DejaVu Sans Condensed", "DejaVu Sans", sans-serif' font-size="22" fill="#fff" text-anchor="middle">V</text>
<line x1="2823.5" y1="281" x2="2823.5" y2="305" stroke="#4a4a4a" stroke-width="1" />
<text x="2839.0" y="300" font-family='"DejaVu Sans Condensed", "DejaVu Sans", sans-serif' font-size="22" fill="#fff" text-anchor="middle">W</text>
<line x1="2853.5" y1="281" x2="2853.5" y2="305" stroke="#4a4a4a" stroke-width="1" />
<line x1="53" y1="281" x2="53" y2="305" stroke="#3a3a3a" stroke-width="1" />
<path d="M50 282 V301.3 H30 Z" fill="#5c5c5c"/>
<rect x="53" y="305" width="2807" height="1365" fill="#fff"/>
<rect x="11" y="305" width="42" height="1365" fill="#0a0a0a"/>
<rect x="11" y="305" width="42" height="46" fill="#6b6b6b"/>
<text x="32" y="345.5" font-family='"DejaVu Sans Condensed", "DejaVu Sans", sans-serif' font-size="22" fill="#fff" text-anchor="middle">1</text>
<line x1="11" y1="350.5" x2="53" y2="350.5" stroke="#6e6e6e" stroke-width="1" />
<text x="32" y="385.5" font-family='"DejaVu Sans Condensed", "DejaVu Sans", sans-serif' font-size="22" fill="#fff" text-anchor="middle">2</text>
<line x1="11" y1="390.5" x2="53" y2="390.5" stroke="#6e6e6e" stroke-width="1" />
<text x="32" y="427.0" font-family='"DejaVu Sans Condensed", "DejaVu Sans", sans-serif' font-size="22" fill="#fff" text-anchor="middle">3</text>
<line x1="11" y1="431.5" x2="53" y2="431.5" stroke="#6e6e6e" stroke-width="1" />
<text x="32" y="455.5" font-family='"DejaVu Sans Condensed", "DejaVu Sans", sans-serif' font-size="22" fill="#fff" text-anchor="middle">4</text>
<line x1="11" y1="460.5" x2="53" y2="460.5" stroke="#6e6e6e" stroke-width="1" />
<text x="32" y="498.5" font-family='"DejaVu Sans Condensed", "DejaVu Sans", sans-serif' font-size="22" fill="#fff" text-anchor="middle">5</text>
<line x1="11" y1="503.5" x2="53" y2="503.5" stroke="#6e6e6e" stroke-width="1" />
<text x="32" y="532.5" font-family='"DejaVu Sans Condensed", "DejaVu Sans", sans-serif' font-size="22" fill="#fff" text-anchor="middle">6</text>
<line x1="11" y1="537.5" x2="53" y2="537.5" stroke="#6e6e6e" stroke-width="1" />
<text x="32" y="562.0" font-family='"DejaVu Sans Condensed", "DejaVu Sans", sans-serif' font-size="22" fill="#fff" text-anchor="middle">7</text>
<line x1="11" y1="567.5" x2="53" y2="567.5" stroke="#6e6e6e" stroke-width="1" />
<line x1="11" y1="573.5" x2="53" y2="573.5" stroke="#6e6e6e" stroke-width="1" />
<text x="32" y="597.0" font-family='"DejaVu Sans Condensed", "DejaVu Sans", sans-serif' font-size="22" fill="#fff" text-anchor="middle">9</text>
<line x1="11" y1="601.5" x2="53" y2="601.5" stroke="#6e6e6e" stroke-width="1" />
<text x="32" y="626.0" font-family='"DejaVu Sans Condensed", "DejaVu Sans", sans-serif' font-size="22" fill="#fff" text-anchor="middle">10</text>
<line x1="11" y1="631.5" x2="53" y2="631.5" stroke="#6e6e6e" stroke-width="1" />
<text x="32" y="655.0" font-family='"DejaVu Sans Condensed", "DejaVu Sans", sans-serif' font-size="22" fill="#fff" text-anchor="middle">11</text>
<line x1="11" y1="659.5" x2="53" y2="659.5" stroke="#6e6e6e" stroke-width="1" />
<text x="32" y="684.0" font-family='"DejaVu Sans Condensed", "DejaVu Sans", sans-serif' font-size="22" fill="#fff" text-anchor="middle">12</text>
<line x1="11" y1="689.5" x2="53" y2="689.5" stroke="#6e6e6e" stroke-width="1" />
<text x="32" y="712.5" font-family='"DejaVu Sans Condensed", "DejaVu Sans", sans-serif' font-size="22" fill="#fff" text-anchor="middle">13</text>
<line x1="11" y1="717.5" x2="53" y2="717.5" stroke="#6e6e6e" stroke-width="1" />
<text x="32" y="742.0" font-family='"DejaVu Sans Condensed", "DejaVu Sans", sans-serif' font-size="22" fill="#fff" text-anchor="middle">14</text>
<line x1="11" y1="747.5" x2="53" y2="747.5" stroke="#6e6e6e" stroke-width="1" />
<text x="32" y="766.0" font-family='"DejaVu Sans Condensed", "DejaVu Sans", sans-serif' font-size="22" fill="#fff" text-anchor="middle">15</text>
<line x1="11" y1="767.5" x2="53" y2="767.5" stroke="#6e6e6e" stroke-width="1" />
<text x="32" y="805.5" font-family='"DejaVu Sans Condensed", "DejaVu Sans", sans-serif' font-size="22" fill="#fff" text-anchor="middle">16</text>
<line x1="11" y1="810.5" x2="53" y2="810.5" stroke="#6e6e6e" stroke-width="1" />
<text x="32" y="834.5" font-family='"DejaVu Sans Condensed", "DejaVu Sans", sans-serif' font-size="22" fill="#fff" text-anchor="middle">17</text>
<line x1="11" y1="839.5" x2="53" y2="839.5" stroke="#6e6e6e" stroke-width="1" />
<text x="32" y="863.5" font-family='"DejaVu Sans Condensed", "DejaVu Sans", sans-serif' font-size="22" fill="#fff" text-anchor="middle">18</text>
<line x1="11" y1="868.5" x2="53" y2="868.5" stroke="#6e6e6e" stroke-width="1" />
<text x="32" y="892.5" font-family='"DejaVu Sans Condensed", "DejaVu Sans", sans-serif' font-size="22" fill="#fff" text-anchor="middle">19</text>
<line x1="11" y1="897.5" x2="53" y2="897.5" stroke="#6e6e6e" stroke-width="1" />
<text x="32" y="921.5" font-family='"DejaVu Sans Condensed", "DejaVu Sans", sans-serif' font-size="22" fill="#fff" text-anchor="middle">20</text>
<line x1="11" y1="926.5" x2="53" y2="926.5" stroke="#6e6e6e" stroke-width="1" />
<text x="32" y="950.5" font-family='"DejaVu Sans Condensed", "DejaVu Sans", sans-serif' font-size="22" fill="#fff" text-anchor="middle">21</text>
<line x1="11" y1="955.5" x2="53" y2="955.5" stroke="#6e6e6e" stroke-width="1" />
<text x="32" y="979.5" font-family='"DejaVu Sans Condensed", "DejaVu Sans", sans-serif' font-size="22" fill="#fff" text-anchor="middle">22</text>
<line x1="11" y1="984.5" x2="53" y2="984.5" stroke="#6e6e6e" stroke-width="1" />
<text x="32" y="1008.5" font-family='"DejaVu Sans Condensed", "DejaVu Sans", sans-serif' font-size="22" fill="#fff" text-anchor="middle">23</text>
<line x1="11" y1="1013.5" x2="53" y2="1013.5" stroke="#6e6e6e" stroke-width="1" />
<text x="32" y="1037.5" font-family='"DejaVu Sans Condensed", "DejaVu Sans", sans-serif' font-size="22" fill="#fff" text-anchor="middle">24</text>
<line x1="11" y1="1042.5" x2="53" y2="1042.5" stroke="#6e6e6e" stroke-width="1" />
<text x="32" y="1066.5" font-family='"DejaVu Sans Condensed", "DejaVu Sans", sans-serif' font-size="22" fill="#fff" text-anchor="middle">25</text>
<line x1="11" y1="1071.5" x2="53" y2="1071.5" stroke="#6e6e6e" stroke-width="1" />
<text x="32" y="1095.5" font-family='"DejaVu Sans Condensed", "DejaVu Sans", sans-serif' font-size="22" fill="#fff" text-anchor="middle">26</text>
<line x1="11" y1="1100.5" x2="53" y2="1100.5" stroke="#6e6e6e" stroke-width="1" />
<text x="32" y="1124.5" font-family='"DejaVu Sans Condensed", "DejaVu Sans", sans-serif' font-size="22" fill="#fff" text-anchor="middle">27</text>
<line x1="11" y1="1129.5" x2="53" y2="1129.5" stroke="#6e6e6e" stroke-width="1" />
<text x="32" y="1153.5" font-family='"DejaVu Sans Condensed", "DejaVu Sans", sans-serif' font-size="22" fill="#fff" text-anchor="middle">28</text>
<line x1="11" y1="1158.5" x2="53" y2="1158.5" stroke="#6e6e6e" stroke-width="1" />
<text x="32" y="1182.5" font-family='"DejaVu Sans Condensed", "DejaVu Sans", sans-serif' font-size="22" fill="#fff" text-anchor="middle">29</text>
<line x1="11" y1="1187.5" x2="53" y2="1187.5" stroke="#6e6e6e" stroke-width="1" />
<text x="32" y="1211.5" font-family='"DejaVu Sans Condensed", "DejaVu Sans", sans-serif' font-size="22" fill="#fff" text-anchor="middle">30</text>
<line x1="11" y1="1216.5" x2="53" y2="1216.5" stroke="#6e6e6e" stroke-width="1" />
<text x="32" y="1240.5" font-family='"DejaVu Sans Condensed", "DejaVu Sans", sans-serif' font-size="22" fill="#fff" text-anchor="middle">31</text>
<line x1="11" y1="1245.5" x2="53" y2="1245.5" stroke="#6e6e6e" stroke-width="1" />
<text x="32" y="1269.5" font-family='"DejaVu Sans Condensed", "DejaVu Sans", sans-serif' font-size="22" fill="#fff" text-anchor="middle">32</text>
<line x1="11" y1="1274.5" x2="53" y2="1274.5" stroke="#6e6e6e" stroke-width="1" />
<text x="32" y="1298.5" font-family='"DejaVu Sans Condensed", "DejaVu Sans", sans-serif' font-size="22" fill="#fff" text-anchor="middle">33</text>
<line x1="11" y1="1303.5" x2="53" y2="1303.5" stroke="#6e6e6e" stroke-width="1" />
<text x="32" y="1327.5" font-family='"DejaVu Sans Condensed", "DejaVu Sans", sans-serif' font-size="22" fill="#fff" text-anchor="middle">34</text>
<line x1="11" y1="1332.5" x2="53" y2="1332.5" stroke="#6e6e6e" stroke-width="1" />
<text x="32" y="1356.5" font-family='"DejaVu Sans Condensed", "DejaVu Sans", sans-serif' font-size="22" fill="#fff" text-anchor="middle">35</text>
<line x1="11" y1="1361.5" x2="53" y2="1361.5" stroke="#6e6e6e" stroke-width="1" />
<text x="32" y="1385.5" font-family='"DejaVu Sans Condensed", "DejaVu Sans", sans-serif' font-size="22" fill="#fff" text-anchor="middle">36</text>
<line x1="11" y1="1390.5" x2="53" y2="1390.5" stroke="#6e6e6e" stroke-width="1" />
<text x="32" y="1414.5" font-family='"DejaVu Sans Condensed", "DejaVu Sans", sans-serif' font-size="22" fill="#fff" text-anchor="middle">37</text>
<line x1="11" y1="1419.5" x2="53" y2="1419.5" stroke="#6e6e6e" stroke-width="1" />
<text x="32" y="1443.5" font-family='"DejaVu Sans Condensed", "DejaVu Sans", sans-serif' font-size="22" fill="#fff" text-anchor="middle">38</text>
<line x1="11" y1="1448.5" x2="53" y2="1448.5" stroke="#6e6e6e" stroke-width="1" />
<text x="32" y="1472.5" font-family='"DejaVu Sans Condensed", "DejaVu Sans", sans-serif' font-size="22" fill="#fff" text-anchor="middle">39</text>
<line x1="11" y1="1477.5" x2="53" y2="1477.5" stroke="#6e6e6e" stroke-width="1" />
<text x="32" y="1501.5" font-family='"DejaVu Sans Condensed", "DejaVu Sans", sans-serif' font-size="22" fill="#fff" text-anchor="middle">40</text>
<line x1="11" y1="1506.5" x2="53" y2="1506.5" stroke="#6e6e6e" stroke-width="1" />
<text x="32" y="1530.5" font-family='"DejaVu Sans Condensed", "DejaVu Sans", sans-serif' font-size="22" fill="#fff" text-anchor="middle">41</text>
<line x1="11" y1="1535.5" x2="53" y2="1535.5" stroke="#6e6e6e" stroke-width="1" />
<text x="32" y="1573.5" font-family='"DejaVu Sans Condensed", "DejaVu Sans", sans-serif' font-size="22" fill="#fff" text-anchor="middle">42</text>
<line x1="11" y1="1578.5" x2="53" y2="1578.5" stroke="#6e6e6e" stroke-width="1" />
<text x="32" y="1602.5" font-family='"DejaVu Sans Condensed", "DejaVu Sans", sans-serif' font-size="22" fill="#fff" text-anchor="middle">43</text>
<line x1="11" y1="1607.5" x2="53" y2="1607.5" stroke="#6e6e6e" stroke-width="1" />
<text x="32" y="1631.5" font-family='"DejaVu Sans Condensed", "DejaVu Sans", sans-serif' font-size="22" fill="#fff" text-anchor="middle">44</text>
<line x1="11" y1="1636.5" x2="53" y2="1636.5" stroke="#6e6e6e" stroke-width="1" />
<text x="32" y="1660.5" font-family='"DejaVu Sans Condensed", "DejaVu Sans", sans-serif' font-size="22" fill="#fff" text-anchor="middle">45</text>
<line x1="11" y1="1665.5" x2="53" y2="1665.5" stroke="#6e6e6e" stroke-width="1" />
<line x1="11" y1="1669.5" x2="53" y2="1669.5" stroke="#6e6e6e" stroke-width="1" />
<line x1="53" y1="305" x2="53" y2="351" stroke="#1e7b45" stroke-width="2" />
<line x1="53" y1="305.5" x2="82" y2="305.5" stroke="#1e7b45" stroke-width="1.5" />
<text x="89" y="343" font-family='"DejaVu Sans", sans-serif' font-size="37" fill="#222" font-weight="700" textLength="254" lengthAdjust="spacingAndGlyphs">Top Revenue</text>
<text x="89" y="384" font-family='"DejaVu Sans", sans-serif' font-size="34" fill="#000" font-weight="700" textLength="312.5" lengthAdjust="spacingAndGlyphs">ABC Company Inc.</text>
<text x="86.5" y="420" font-family='"DejaVu Sans", sans-serif' font-size="22.6" fill="#2b6fe8" font-weight="700" textLength="257.5" lengthAdjust="spacingAndGlyphs">Go to Table of Contents</text>
<line x1="86.5" y1="424" x2="344" y2="424" stroke="#2b6fe8" stroke-width="2" />
<line x1="53" y1="461.5" x2="82" y2="461.5" stroke="#9a9a9a" stroke-width="1" />
<line x1="2823.5" y1="461.5" x2="2860" y2="461.5" stroke="#9a9a9a" stroke-width="1" />
<rect x="82" y="461.5" width="2741.5" height="42" fill="#4b50d2"/>
<rect x="82" y="503" width="518" height="1" fill="#4b50d2"/>
<text x="938.7" y="494.6" font-family='"DejaVu Sans", sans-serif' font-size="35" fill="#fff" font-weight="700" textLength="1026" lengthAdjust="spacingAndGlyphs">Top 5 Revenue Streams ($'000) - 5 years to December 2030</text>
<rect x="82" y="539.3" width="1538.5" height="27.6" fill="#6f75e8"/>
<line x1="600" y1="539" x2="600" y2="567" stroke="#fff" stroke-width="1.2" />
<line x1="804" y1="539" x2="804" y2="567" stroke="#fff" stroke-width="1.2" />
<line x1="1008" y1="539" x2="1008" y2="567" stroke="#fff" stroke-width="1.2" />
<line x1="1212" y1="539" x2="1212" y2="567" stroke="#fff" stroke-width="1.2" />
<line x1="1416.5" y1="539" x2="1416.5" y2="567" stroke="#fff" stroke-width="1.2" />
<text x="97.7" y="560.8" font-family='"DejaVu Sans", sans-serif' font-size="21" fill="#fff" font-weight="700" textLength="131.7" lengthAdjust="spacingAndGlyphs">Year Ending</text>
<text x="703.0" y="560.8" font-family='"DejaVu Sans", sans-serif' font-size="21" fill="#fff" font-weight="700" text-anchor="middle" textLength="54.8" lengthAdjust="spacingAndGlyphs">2026</text>
<text x="907.0" y="560.8" font-family='"DejaVu Sans", sans-serif' font-size="21" fill="#fff" font-weight="700" text-anchor="middle" textLength="54.8" lengthAdjust="spacingAndGlyphs">2027</text>
<text x="1111.0" y="560.8" font-family='"DejaVu Sans", sans-serif' font-size="21" fill="#fff" font-weight="700" text-anchor="middle" textLength="54.8" lengthAdjust="spacingAndGlyphs">2028</text>
<text x="1315.25" y="560.8" font-family='"DejaVu Sans", sans-serif' font-size="21" fill="#fff" font-weight="700" text-anchor="middle" textLength="54.8" lengthAdjust="spacingAndGlyphs">2029</text>
<text x="1519.5" y="560.8" font-family='"DejaVu Sans", sans-serif' font-size="21" fill="#fff" font-weight="700" text-anchor="middle" textLength="54.8" lengthAdjust="spacingAndGlyphs">2030</text>
<rect x="1877.8" y="539.3" width="804.7" height="27.6" fill="#6f75e8"/>
<line x1="2038.5" y1="539" x2="2038.5" y2="567" stroke="#fff" stroke-width="1.2" />
<line x1="2199.5" y1="539" x2="2199.5" y2="567" stroke="#fff" stroke-width="1.2" />
<line x1="2360.5" y1="539" x2="2360.5" y2="567" stroke="#fff" stroke-width="1.2" />
<line x1="2521.5" y1="539" x2="2521.5" y2="567" stroke="#fff" stroke-width="1.2" />
<text x="1958.2" y="560.8" font-family='"DejaVu Sans", sans-serif' font-size="21" fill="#fff" font-weight="700" text-anchor="middle" textLength="54.8" lengthAdjust="spacingAndGlyphs">2026</text>
<text x="2119.2" y="560.8" font-family='"DejaVu Sans", sans-serif' font-size="21" fill="#fff" font-weight="700" text-anchor="middle" textLength="54.8" lengthAdjust="spacingAndGlyphs">2027</text>
<text x="2280.2" y="560.8" font-family='"DejaVu Sans", sans-serif' font-size="21" fill="#fff" font-weight="700" text-anchor="middle" textLength="54.8" lengthAdjust="spacingAndGlyphs">2028</text>
<text x="2441.2" y="560.8" font-family='"DejaVu Sans", sans-serif' font-size="21" fill="#fff" font-weight="700" text-anchor="middle" textLength="54.8" lengthAdjust="spacingAndGlyphs">2029</text>
<text x="2602.2" y="560.8" font-family='"DejaVu Sans", sans-serif' font-size="21" fill="#fff" font-weight="700" text-anchor="middle" textLength="54.8" lengthAdjust="spacingAndGlyphs">2030</text>
<text x="85.2" y="595.8" font-family='"DejaVu Sans Condensed", "DejaVu Sans", sans-serif' font-size="21" fill="#000" textLength="233.7" lengthAdjust="spacingAndGlyphs">Buyer Side Transactions</text>
<text x="792.7" y="595.8" font-family='"DejaVu Sans Condensed", "DejaVu Sans", sans-serif' font-size="21" fill="#000" text-anchor="end" textLength="35.2" lengthAdjust="spacingAndGlyphs">250</text>
<text x="2024.5" y="595.8" font-family='"DejaVu Sans Condensed", "DejaVu Sans", sans-serif' font-size="21" fill="#000" text-anchor="end" font-style="italic" textLength="62.8" lengthAdjust="spacingAndGlyphs">49.0%</text>
<text x="996.7" y="595.8" font-family='"DejaVu Sans Condensed", "DejaVu Sans", sans-serif' font-size="21" fill="#000" text-anchor="end" textLength="35.2" lengthAdjust="spacingAndGlyphs">461</text>
<text x="2185.5" y="595.8" font-family='"DejaVu Sans Condensed", "DejaVu Sans", sans-serif' font-size="21" fill="#000" text-anchor="end" font-style="italic" textLength="62.8" lengthAdjust="spacingAndGlyphs">50.0%</text>
<text x="1200.7" y="595.8" font-family='"DejaVu Sans Condensed", "DejaVu Sans", sans-serif' font-size="21" fill="#000" text-anchor="end" textLength="35.2" lengthAdjust="spacingAndGlyphs">735</text>
<text x="2346.5" y="595.8" font-family='"DejaVu Sans Condensed", "DejaVu Sans", sans-serif' font-size="21" fill="#000" text-anchor="end" font-style="italic" textLength="62.8" lengthAdjust="spacingAndGlyphs">50.1%</text>
<text x="1405.2" y="595.8" font-family='"DejaVu Sans Condensed", "DejaVu Sans", sans-serif' font-size="21" fill="#000" text-anchor="end" textLength="52.7" lengthAdjust="spacingAndGlyphs">1,077</text>
<text x="2507.5" y="595.8" font-family='"DejaVu Sans Condensed", "DejaVu Sans", sans-serif' font-size="21" fill="#000" text-anchor="end" font-style="italic" textLength="62.8" lengthAdjust="spacingAndGlyphs">49.8%</text>
<text x="1609.2" y="595.8" font-family='"DejaVu Sans Condensed", "DejaVu Sans", sans-serif' font-size="21" fill="#000" text-anchor="end" textLength="52.7" lengthAdjust="spacingAndGlyphs">1,490</text>
<text x="2668.5" y="595.8" font-family='"DejaVu Sans Condensed", "DejaVu Sans", sans-serif' font-size="21" fill="#000" text-anchor="end" font-style="italic" textLength="62.8" lengthAdjust="spacingAndGlyphs">49.5%</text>
<text x="85.2" y="624.8" font-family='"DejaVu Sans Condensed", "DejaVu Sans", sans-serif' font-size="21" fill="#000" textLength="231.6" lengthAdjust="spacingAndGlyphs">Seller Side Transactions</text>
<text x="792.7" y="624.8" font-family='"DejaVu Sans Condensed", "DejaVu Sans", sans-serif' font-size="21" fill="#000" text-anchor="end" textLength="35.2" lengthAdjust="spacingAndGlyphs">200</text>
<text x="2024.5" y="624.8" font-family='"DejaVu Sans Condensed", "DejaVu Sans", sans-serif' font-size="21" fill="#000" text-anchor="end" font-style="italic" textLength="62.8" lengthAdjust="spacingAndGlyphs">39.2%</text>
<text x="996.7" y="624.8" font-family='"DejaVu Sans Condensed", "DejaVu Sans", sans-serif' font-size="21" fill="#000" text-anchor="end" textLength="35.2" lengthAdjust="spacingAndGlyphs">359</text>
<text x="2185.5" y="624.8" font-family='"DejaVu Sans Condensed", "DejaVu Sans", sans-serif' font-size="21" fill="#000" text-anchor="end" font-style="italic" textLength="62.8" lengthAdjust="spacingAndGlyphs">38.9%</text>
<text x="1200.7" y="624.8" font-family='"DejaVu Sans Condensed", "DejaVu Sans", sans-serif' font-size="21" fill="#000" text-anchor="end" textLength="35.2" lengthAdjust="spacingAndGlyphs">578</text>
<text x="2346.5" y="624.8" font-family='"DejaVu Sans Condensed", "DejaVu Sans", sans-serif' font-size="21" fill="#000" text-anchor="end" font-style="italic" textLength="62.8" lengthAdjust="spacingAndGlyphs">39.3%</text>
<text x="1405.2" y="624.8" font-family='"DejaVu Sans Condensed", "DejaVu Sans", sans-serif' font-size="21" fill="#000" text-anchor="end" textLength="35.2" lengthAdjust="spacingAndGlyphs">862</text>
<text x="2507.5" y="624.8" font-family='"DejaVu Sans Condensed", "DejaVu Sans", sans-serif' font-size="21" fill="#000" text-anchor="end" font-style="italic" textLength="62.8" lengthAdjust="spacingAndGlyphs">39.9%</text>
<text x="1609.2" y="624.8" font-family='"DejaVu Sans Condensed", "DejaVu Sans", sans-serif' font-size="21" fill="#000" text-anchor="end" textLength="52.7" lengthAdjust="spacingAndGlyphs">1,214</text>
<text x="2668.5" y="624.8" font-family='"DejaVu Sans Condensed", "DejaVu Sans", sans-serif' font-size="21" fill="#000" text-anchor="end" font-style="italic" textLength="62.8" lengthAdjust="spacingAndGlyphs">40.4%</text>
<text x="85.2" y="653.8" font-family='"DejaVu Sans Condensed", "DejaVu Sans", sans-serif' font-size="21" fill="#000" textLength="189.9" lengthAdjust="spacingAndGlyphs">Rental Transactions</text>
<text x="792.7" y="653.8" font-family='"DejaVu Sans Condensed", "DejaVu Sans", sans-serif' font-size="21" fill="#000" text-anchor="end" textLength="23.4" lengthAdjust="spacingAndGlyphs">60</text>
<text x="2024.5" y="653.8" font-family='"DejaVu Sans Condensed", "DejaVu Sans", sans-serif' font-size="21" fill="#000" text-anchor="end" font-style="italic" textLength="62.8" lengthAdjust="spacingAndGlyphs">11.8%</text>
<text x="996.7" y="653.8" font-family='"DejaVu Sans Condensed", "DejaVu Sans", sans-serif' font-size="21" fill="#000" text-anchor="end" textLength="35.2" lengthAdjust="spacingAndGlyphs">102</text>
<text x="2185.5" y="653.8" font-family='"DejaVu Sans Condensed", "DejaVu Sans", sans-serif' font-size="21" fill="#000" text-anchor="end" font-style="italic" textLength="62.8" lengthAdjust="spacingAndGlyphs">11.1%</text>
<text x="1200.7" y="653.8" font-family='"DejaVu Sans Condensed", "DejaVu Sans", sans-serif' font-size="21" fill="#000" text-anchor="end" textLength="35.2" lengthAdjust="spacingAndGlyphs">156</text>
<text x="2346.5" y="653.8" font-family='"DejaVu Sans Condensed", "DejaVu Sans", sans-serif' font-size="21" fill="#000" text-anchor="end" font-style="italic" textLength="62.8" lengthAdjust="spacingAndGlyphs">10.6%</text>
<text x="1405.2" y="653.8" font-family='"DejaVu Sans Condensed", "DejaVu Sans", sans-serif' font-size="21" fill="#000" text-anchor="end" textLength="35.2" lengthAdjust="spacingAndGlyphs">223</text>
<text x="2507.5" y="653.8" font-family='"DejaVu Sans Condensed", "DejaVu Sans", sans-serif' font-size="21" fill="#000" text-anchor="end" font-style="italic" textLength="62.8" lengthAdjust="spacingAndGlyphs">10.3%</text>
<text x="1609.2" y="653.8" font-family='"DejaVu Sans Condensed", "DejaVu Sans", sans-serif' font-size="21" fill="#000" text-anchor="end" textLength="35.2" lengthAdjust="spacingAndGlyphs">303</text>
<text x="2668.5" y="653.8" font-family='"DejaVu Sans Condensed", "DejaVu Sans", sans-serif' font-size="21" fill="#000" text-anchor="end" font-style="italic" textLength="62.8" lengthAdjust="spacingAndGlyphs">10.1%</text>
<text x="85.2" y="682.8" font-family='"DejaVu Sans Condensed", "DejaVu Sans", sans-serif' font-size="21" fill="#000">-</text>
<text x="765" y="682.8" font-family='"DejaVu Sans Condensed", "DejaVu Sans", sans-serif' font-size="21" fill="#000" text-anchor="middle">-</text>
<text x="2024.8" y="682.8" font-family='"DejaVu Sans Condensed", "DejaVu Sans", sans-serif' font-size="21" fill="#000" text-anchor="end" font-style="italic">-</text>
<text x="969" y="682.8" font-family='"DejaVu Sans Condensed", "DejaVu Sans", sans-serif' font-size="21" fill="#000" text-anchor="middle">-</text>
<text x="2185.8" y="682.8" font-family='"DejaVu Sans Condensed", "DejaVu Sans", sans-serif' font-size="21" fill="#000" text-anchor="end" font-style="italic">-</text>
<text x="1173" y="682.8" font-family='"DejaVu Sans Condensed", "DejaVu Sans", sans-serif' font-size="21" fill="#000" text-anchor="middle">-</text>
<text x="2346.8" y="682.8" font-family='"DejaVu Sans Condensed", "DejaVu Sans", sans-serif' font-size="21" fill="#000" text-anchor="end" font-style="italic">-</text>
<text x="1377.5" y="682.8" font-family='"DejaVu Sans Condensed", "DejaVu Sans", sans-serif' font-size="21" fill="#000" text-anchor="middle">-</text>
<text x="2507.8" y="682.8" font-family='"DejaVu Sans Condensed", "DejaVu Sans", sans-serif' font-size="21" fill="#000" text-anchor="end" font-style="italic">-</text>
<text x="1581.5" y="682.8" font-family='"DejaVu Sans Condensed", "DejaVu Sans", sans-serif' font-size="21" fill="#000" text-anchor="middle">-</text>
<text x="2668.8" y="682.8" font-family='"DejaVu Sans Condensed", "DejaVu Sans", sans-serif' font-size="21" fill="#000" text-anchor="end" font-style="italic">-</text>
<text x="85.2" y="711.8" font-family='"DejaVu Sans Condensed", "DejaVu Sans", sans-serif' font-size="21" fill="#000" textLength="146.7" lengthAdjust="spacingAndGlyphs">Other Revenue</text>
<text x="765" y="711.8" font-family='"DejaVu Sans Condensed", "DejaVu Sans", sans-serif' font-size="21" fill="#000" text-anchor="middle">-</text>
<text x="2024.8" y="711.8" font-family='"DejaVu Sans Condensed", "DejaVu Sans", sans-serif' font-size="21" fill="#000" text-anchor="end" font-style="italic">-</text>
<text x="969" y="711.8" font-family='"DejaVu Sans Condensed", "DejaVu Sans", sans-serif' font-size="21" fill="#000" text-anchor="middle">-</text>
<text x="2185.8" y="711.8" font-family='"DejaVu Sans Condensed", "DejaVu Sans", sans-serif' font-size="21" fill="#000" text-anchor="end" font-style="italic">-</text>
<text x="1173" y="711.8" font-family='"DejaVu Sans Condensed", "DejaVu Sans", sans-serif' font-size="21" fill="#000" text-anchor="middle">-</text>
<text x="2346.8" y="711.8" font-family='"DejaVu Sans Condensed", "DejaVu Sans", sans-serif' font-size="21" fill="#000" text-anchor="end" font-style="italic">-</text>
<text x="1377.5" y="711.8" font-family='"DejaVu Sans Condensed", "DejaVu Sans", sans-serif' font-size="21" fill="#000" text-anchor="middle">-</text>
<text x="2507.8" y="711.8" font-family='"DejaVu Sans Condensed", "DejaVu Sans", sans-serif' font-size="21" fill="#000" text-anchor="end" font-style="italic">-</text>
<text x="1581.5" y="711.8" font-family='"DejaVu Sans Condensed", "DejaVu Sans", sans-serif' font-size="21" fill="#000" text-anchor="middle">-</text>
<text x="2668.8" y="711.8" font-family='"DejaVu Sans Condensed", "DejaVu Sans", sans-serif' font-size="21" fill="#000" text-anchor="end" font-style="italic">-</text>
<rect x="81" y="718.3" width="1539.5" height="29.5" fill="#4ab3e8"/>
<rect x="1877" y="718.3" width="805.8" height="29.5" fill="#4ab3e8"/>
<text x="98.1" y="742.7" font-family='"DejaVu Sans", sans-serif' font-size="24.6" fill="#fff" font-weight="700" textLength="177.8" lengthAdjust="spacingAndGlyphs">Total Revenue</text>
<text x="790" y="741" font-family='"DejaVu Sans", sans-serif' font-size="21" fill="#fff" font-weight="700" text-anchor="end" textLength="41.6" lengthAdjust="spacingAndGlyphs">510</text>
<text x="2031.3" y="741" font-family='"DejaVu Sans", sans-serif' font-size="21" fill="#fff" font-weight="700" text-anchor="end" font-style="italic" textLength="66.6" lengthAdjust="spacingAndGlyphs">100%</text>
<text x="994" y="741" font-family='"DejaVu Sans", sans-serif' font-size="21" fill="#fff" font-weight="700" text-anchor="end" textLength="41.6" lengthAdjust="spacingAndGlyphs">922</text>
<text x="2192.3" y="741" font-family='"DejaVu Sans", sans-serif' font-size="21" fill="#fff" font-weight="700" text-anchor="end" font-style="italic" textLength="66.6" lengthAdjust="spacingAndGlyphs">100%</text>
<text x="1198" y="741" font-family='"DejaVu Sans", sans-serif' font-size="21" fill="#fff" font-weight="700" text-anchor="end" textLength="63.1" lengthAdjust="spacingAndGlyphs">1,469</text>
<text x="2353.3" y="741" font-family='"DejaVu Sans", sans-serif' font-size="21" fill="#fff" font-weight="700" text-anchor="end" font-style="italic" textLength="66.6" lengthAdjust="spacingAndGlyphs">100%</text>
<text x="1402.5" y="741" font-family='"DejaVu Sans", sans-serif' font-size="21" fill="#fff" font-weight="700" text-anchor="end" textLength="63.1" lengthAdjust="spacingAndGlyphs">2,161</text>
<text x="2514.3" y="741" font-family='"DejaVu Sans", sans-serif' font-size="21" fill="#fff" font-weight="700" text-anchor="end" font-style="italic" textLength="66.6" lengthAdjust="spacingAndGlyphs">100%</text>
<text x="1606.5" y="741" font-family='"DejaVu Sans", sans-serif' font-size="21" fill="#fff" font-weight="700" text-anchor="end" textLength="63.1" lengthAdjust="spacingAndGlyphs">3,007</text>
<text x="2675.3" y="741" font-family='"DejaVu Sans", sans-serif' font-size="21" fill="#fff" font-weight="700" text-anchor="end" font-style="italic" textLength="66.6" lengthAdjust="spacingAndGlyphs">100%</text>
<rect x="82" y="769" width="2741.5" height="42" fill="#4b50d2"/>
<text x="938.7" y="803" font-family='"DejaVu Sans", sans-serif' font-size="35" fill="#fff" font-weight="700" textLength="1026" lengthAdjust="spacingAndGlyphs">Top 5 Revenue Streams ($'000) - 5 years to December 2030</text>
<line x1="175.5" y1="1491.6" x2="1619" y2="1491.6" stroke="#6f8fc6" stroke-width="1.1" />
<text x="153.9" y="1498.6" font-family='"DejaVu Sans", sans-serif' font-size="21" fill="#000" font-weight="700" text-anchor="end" textLength="39" lengthAdjust="spacingAndGlyphs">0%</text>
<line x1="175.5" y1="1427.8" x2="1619" y2="1427.8" stroke="#6f8fc6" stroke-width="1.1" />
<text x="153.9" y="1434.8" font-family='"DejaVu Sans", sans-serif' font-size="21" fill="#000" font-weight="700" text-anchor="end" textLength="53.6" lengthAdjust="spacingAndGlyphs">10%</text>
<line x1="175.5" y1="1364.0" x2="1619" y2="1364.0" stroke="#6f8fc6" stroke-width="1.1" />
<text x="153.9" y="1371.0" font-family='"DejaVu Sans", sans-serif' font-size="21" fill="#000" font-weight="700" text-anchor="end" textLength="53.6" lengthAdjust="spacingAndGlyphs">20%</text>
<line x1="175.5" y1="1300.2" x2="1619" y2="1300.2" stroke="#6f8fc6" stroke-width="1.1" />
<text x="153.9" y="1307.2" font-family='"DejaVu Sans", sans-serif' font-size="21" fill="#000" font-weight="700" text-anchor="end" textLength="53.6" lengthAdjust="spacingAndGlyphs">30%</text>
<line x1="175.5" y1="1236.4" x2="1619" y2="1236.4" stroke="#6f8fc6" stroke-width="1.1" />
<text x="153.9" y="1243.4" font-family='"DejaVu Sans", sans-serif' font-size="21" fill="#000" font-weight="700" text-anchor="end" textLength="53.6" lengthAdjust="spacingAndGlyphs">40%</text>
<line x1="175.5" y1="1172.5" x2="1619" y2="1172.5" stroke="#6f8fc6" stroke-width="1.1" />
<text x="153.9" y="1179.5" font-family='"DejaVu Sans", sans-serif' font-size="21" fill="#000" font-weight="700" text-anchor="end" textLength="53.6" lengthAdjust="spacingAndGlyphs">50%</text>
<line x1="175.5" y1="1108.7" x2="1619" y2="1108.7" stroke="#6f8fc6" stroke-width="1.1" />
<text x="153.9" y="1115.7" font-family='"DejaVu Sans", sans-serif' font-size="21" fill="#000" font-weight="700" text-anchor="end" textLength="53.6" lengthAdjust="spacingAndGlyphs">60%</text>
<line x1="175.5" y1="1044.9" x2="1619" y2="1044.9" stroke="#6f8fc6" stroke-width="1.1" />
<text x="153.9" y="1051.9" font-family='"DejaVu Sans", sans-serif' font-size="21" fill="#000" font-weight="700" text-anchor="end" textLength="53.6" lengthAdjust="spacingAndGlyphs">70%</text>
<line x1="175.5" y1="981.1" x2="1619" y2="981.1" stroke="#6f8fc6" stroke-width="1.1" />
<text x="153.9" y="988.1" font-family='"DejaVu Sans", sans-serif' font-size="21" fill="#000" font-weight="700" text-anchor="end" textLength="53.6" lengthAdjust="spacingAndGlyphs">80%</text>
<line x1="175.5" y1="917.3" x2="1619" y2="917.3" stroke="#6f8fc6" stroke-width="1.1" />
<text x="153.9" y="924.3" font-family='"DejaVu Sans", sans-serif' font-size="21" fill="#000" font-weight="700" text-anchor="end" textLength="53.6" lengthAdjust="spacingAndGlyphs">90%</text>
<line x1="175.5" y1="853.5" x2="1619" y2="853.5" stroke="#6f8fc6" stroke-width="1.1" />
<text x="153.9" y="860.5" font-family='"DejaVu Sans", sans-serif' font-size="21" fill="#000" font-weight="700" text-anchor="end" textLength="67.4" lengthAdjust="spacingAndGlyphs">100%</text>
<rect x="224.2" y="1178.8" width="192.7" height="312.8" fill="#4ab3e8"/>
<rect x="224.2" y="928.6" width="192.7" height="250.5" fill="#4d51d3"/>
<rect x="224.2" y="853.5" width="192.7" height="75.39999999999999" fill="#f07e71"/>
<rect x="290.0" y="1317.6" width="60" height="35.3" fill="#dde9f6"/>
<text x="320.04999999999995" y="1343.3" font-family='"DejaVu Sans", sans-serif' font-size="21" fill="#000" font-weight="700" text-anchor="middle" textLength="41.6" lengthAdjust="spacingAndGlyphs">250</text>
<rect x="288.0" y="1036.0" width="66" height="35.3" fill="#afb1eb"/>
<text x="322.54999999999995" y="1061.8" font-family='"DejaVu Sans", sans-serif' font-size="21" fill="#000" font-weight="700" text-anchor="middle" textLength="41.6" lengthAdjust="spacingAndGlyphs">200</text>
<rect x="294.0" y="873.4" width="52" height="35.3" fill="#f8cbb0"/>
<text x="323.54999999999995" y="899.1" font-family='"DejaVu Sans", sans-serif' font-size="21" fill="#000" font-weight="700" text-anchor="middle" textLength="27.8" lengthAdjust="spacingAndGlyphs">60</text>
<rect x="304.3" y="836.4" width="32.4" height="35.3" fill="#e2efda"/>
<text x="320.54999999999995" y="862.1" font-family='"DejaVu Sans", sans-serif' font-size="21" fill="#000" font-weight="700" text-anchor="middle">0</text>
<text x="320.54999999999995" y="1527.9" font-family='"DejaVu Sans", sans-serif' font-size="21" fill="#000" font-weight="700" text-anchor="middle" textLength="55.5" lengthAdjust="spacingAndGlyphs">2026</text>
<rect x="513" y="1172.5" width="192.5" height="319.0" fill="#4ab3e8"/>
<rect x="513" y="924.1" width="192.5" height="248.8" fill="#4d51d3"/>
<rect x="513" y="853.5" width="192.5" height="70.89999999999999" fill="#f07e71"/>
<rect x="578.8" y="1314.4" width="60" height="35.3" fill="#dde9f6"/>
<text x="608.75" y="1340.2" font-family='"DejaVu Sans", sans-serif' font-size="21" fill="#000" font-weight="700" text-anchor="middle" textLength="41.6" lengthAdjust="spacingAndGlyphs">461</text>
<rect x="576.8" y="1030.7" width="66" height="35.3" fill="#afb1eb"/>
<text x="611.25" y="1056.4" font-family='"DejaVu Sans", sans-serif' font-size="21" fill="#000" font-weight="700" text-anchor="middle" textLength="41.6" lengthAdjust="spacingAndGlyphs">359</text>
<rect x="576.8" y="871.1" width="66" height="35.3" fill="#f8cbb0"/>
<text x="611.25" y="896.9" font-family='"DejaVu Sans", sans-serif' font-size="21" fill="#000" font-weight="700" text-anchor="middle" textLength="41.6" lengthAdjust="spacingAndGlyphs">102</text>
<rect x="593.0" y="836.4" width="32.4" height="35.3" fill="#e2efda"/>
<text x="609.25" y="862.1" font-family='"DejaVu Sans", sans-serif' font-size="21" fill="#000" font-weight="700" text-anchor="middle">0</text>
<text x="609.25" y="1527.9" font-family='"DejaVu Sans", sans-serif' font-size="21" fill="#000" font-weight="700" text-anchor="middle" textLength="55.5" lengthAdjust="spacingAndGlyphs">2027</text>
<rect x="802" y="1172.3" width="192" height="319.3" fill="#4ab3e8"/>
<rect x="802" y="921.3" width="192" height="251.4" fill="#4d51d3"/>
<rect x="802" y="853.5" width="192" height="68.1" fill="#f07e71"/>
<rect x="867.5" y="1314.3" width="60" height="35.3" fill="#dde9f6"/>
<text x="897.5" y="1340.1" font-family='"DejaVu Sans", sans-serif' font-size="21" fill="#000" font-weight="700" text-anchor="middle" textLength="41.6" lengthAdjust="spacingAndGlyphs">735</text>
<rect x="865.5" y="1029.1" width="66" height="35.3" fill="#afb1eb"/>
<text x="900.0" y="1054.9" font-family='"DejaVu Sans", sans-serif' font-size="21" fill="#000" font-weight="700" text-anchor="middle" textLength="41.6" lengthAdjust="spacingAndGlyphs">578</text>
<rect x="865.5" y="869.7" width="66" height="35.3" fill="#f8cbb0"/>
<text x="900.0" y="895.5" font-family='"DejaVu Sans", sans-serif' font-size="21" fill="#000" font-weight="700" text-anchor="middle" textLength="41.6" lengthAdjust="spacingAndGlyphs">156</text>
<rect x="881.8" y="836.4" width="32.4" height="35.3" fill="#e2efda"/>
<text x="898.0" y="862.1" font-family='"DejaVu Sans", sans-serif' font-size="21" fill="#000" font-weight="700" text-anchor="middle">0</text>
<text x="898.0" y="1527.9" font-family='"DejaVu Sans", sans-serif' font-size="21" fill="#000" font-weight="700" text-anchor="middle" textLength="55.5" lengthAdjust="spacingAndGlyphs">2028</text>
<rect x="1090" y="1173.7" width="193" height="317.9" fill="#4ab3e8"/>
<rect x="1090" y="919.3" width="193" height="254.70000000000002" fill="#4d51d3"/>
<rect x="1090" y="853.5" width="193" height="66.1" fill="#f07e71"/>
<rect x="1145.0" y="1315.0" width="82" height="35.3" fill="#dde9f6"/>
<text x="1186.0" y="1340.8" font-family='"DejaVu Sans", sans-serif' font-size="21" fill="#000" font-weight="700" text-anchor="middle" textLength="63.1" lengthAdjust="spacingAndGlyphs">1,077</text>
<rect x="1154.0" y="1028.9" width="66" height="35.3" fill="#afb1eb"/>
<text x="1188.5" y="1054.6" font-family='"DejaVu Sans", sans-serif' font-size="21" fill="#000" font-weight="700" text-anchor="middle" textLength="41.6" lengthAdjust="spacingAndGlyphs">862</text>
<rect x="1154.0" y="868.8" width="66" height="35.3" fill="#f8cbb0"/>
<text x="1188.5" y="894.5" font-family='"DejaVu Sans", sans-serif' font-size="21" fill="#000" font-weight="700" text-anchor="middle" textLength="41.6" lengthAdjust="spacingAndGlyphs">223</text>
<rect x="1170.3" y="836.4" width="32.4" height="35.3" fill="#e2efda"/>
<text x="1186.5" y="862.1" font-family='"DejaVu Sans", sans-serif' font-size="21" fill="#000" font-weight="700" text-anchor="middle">0</text>
<text x="1186.5" y="1527.9" font-family='"DejaVu Sans", sans-serif' font-size="21" fill="#000" font-weight="700" text-anchor="middle" textLength="55.5" lengthAdjust="spacingAndGlyphs">2029</text>
<rect x="1379" y="1175.4" width="193" height="316.2" fill="#4ab3e8"/>
<rect x="1379" y="917.8" width="193" height="257.90000000000003" fill="#4d51d3"/>
<rect x="1379" y="853.5" width="193" height="64.6" fill="#f07e71"/>
<rect x="1434.0" y="1315.9" width="82" height="35.3" fill="#dde9f6"/>
<text x="1475.0" y="1341.6" font-family='"DejaVu Sans", sans-serif' font-size="21" fill="#000" font-weight="700" text-anchor="middle" textLength="63.1" lengthAdjust="spacingAndGlyphs">1,490</text>
<rect x="1432.7" y="1029.0" width="86.6" height="35.3" fill="#afb1eb"/>
<text x="1477.5" y="1054.7" font-family='"DejaVu Sans", sans-serif' font-size="21" fill="#000" font-weight="700" text-anchor="middle" textLength="63.1" lengthAdjust="spacingAndGlyphs">1,214</text>
<rect x="1443.0" y="868.0" width="66" height="35.3" fill="#f8cbb0"/>
<text x="1477.5" y="893.7" font-family='"DejaVu Sans", sans-serif' font-size="21" fill="#000" font-weight="700" text-anchor="middle" textLength="41.6" lengthAdjust="spacingAndGlyphs">303</text>
<rect x="1459.3" y="836.4" width="32.4" height="35.3" fill="#e2efda"/>
<text x="1475.5" y="862.1" font-family='"DejaVu Sans", sans-serif' font-size="21" fill="#000" font-weight="700" text-anchor="middle">0</text>
<text x="1475.5" y="1527.9" font-family='"DejaVu Sans", sans-serif' font-size="21" fill="#000" font-weight="700" text-anchor="middle" textLength="55.5" lengthAdjust="spacingAndGlyphs">2030</text>
<line x1="1636" y1="890.7" x2="1689" y2="890.7" stroke="#4ab3e8" stroke-width="4" stroke-linecap="round"/>
<circle cx="1661.6" cy="890.7" r="5.2" fill="#4ab3e8"/>
<text x="1696.1" y="897.4" font-family='"DejaVu Sans", sans-serif' font-size="21" fill="#000" font-weight="700" textLength="119.1" lengthAdjust="spacingAndGlyphs">Buyer Side</text>
<text x="1696.1" y="924.8" font-family='"DejaVu Sans", sans-serif' font-size="21" fill="#000" font-weight="700" textLength="142.4" lengthAdjust="spacingAndGlyphs">Transactions</text>
<line x1="1636" y1="1023" x2="1689" y2="1023" stroke="#4d51d3" stroke-width="4" stroke-linecap="round"/>
<rect x="1656.1" y="1017.6" width="11" height="10.8" fill="#4d51d3"/>
<text x="1695.8" y="1029.7" font-family='"DejaVu Sans", sans-serif' font-size="21" fill="#000" font-weight="700" textLength="118.7" lengthAdjust="spacingAndGlyphs">Seller Side</text>
<text x="1696.1" y="1056.7" font-family='"DejaVu Sans", sans-serif' font-size="21" fill="#000" font-weight="700" textLength="142.4" lengthAdjust="spacingAndGlyphs">Transactions</text>
<line x1="1636" y1="1155" x2="1689" y2="1155" stroke="#f07e71" stroke-width="4" stroke-linecap="round"/>
<path d="M1661.6 1149.3 L1667.6 1160.3 H1655.6 Z" fill="#f07e71"/>
<text x="1696.1" y="1161.8" font-family='"DejaVu Sans", sans-serif' font-size="21" fill="#000" font-weight="700" textLength="222" lengthAdjust="spacingAndGlyphs">Rental Transactions</text>
<line x1="1636" y1="1286.5" x2="1689" y2="1286.5" stroke="#efb820" stroke-width="4" stroke-linecap="round"/>
<path d="M1657 1281.5 L1667 1291.5 M1667 1281.5 L1657 1291.5 M1662 1281 V1292" fill="none" stroke="#f3c84a" stroke-width="1.3"/>
<text x="1696.5" y="1293.8" font-family='"DejaVu Sans", sans-serif' font-size="21" fill="#000" font-weight="700">-</text>
<line x1="1636" y1="1419" x2="1689" y2="1419" stroke="#2fb3a3" stroke-width="4" stroke-linecap="round"/>
<rect x="1656.5" y="1413.7" width="10.6" height="10.6" fill="#55a84c"/>
<text x="1696.1" y="1425.8" font-family='"DejaVu Sans", sans-serif' font-size="21" fill="#000" font-weight="700" textLength="167" lengthAdjust="spacingAndGlyphs">Other Revenue</text>
<line x1="2052.6" y1="1489.6" x2="2822" y2="1489.6" stroke="#62acd2" stroke-width="1.1" />
<text x="2023.6" y="1496.6999999999998" font-family='"DejaVu Sans", sans-serif' font-size="21" fill="#000" font-weight="700" text-anchor="end">-</text>
<line x1="2052.6" y1="1410.1" x2="2822" y2="1410.1" stroke="#62acd2" stroke-width="1.1" />
<text x="2023.2" y="1417.1999999999998" font-family='"DejaVu Sans", sans-serif' font-size="21" fill="#000" font-weight="700" text-anchor="end" textLength="40" lengthAdjust="spacingAndGlyphs">200</text>
<line x1="2052.6" y1="1330.5" x2="2822" y2="1330.5" stroke="#62acd2" stroke-width="1.1" />
<text x="2023.2" y="1337.6" font-family='"DejaVu Sans", sans-serif' font-size="21" fill="#000" font-weight="700" text-anchor="end" textLength="40" lengthAdjust="spacingAndGlyphs">400</text>
<line x1="2052.6" y1="1251.0" x2="2822" y2="1251.0" stroke="#62acd2" stroke-width="1.1" />
<text x="2023.2" y="1258.1" font-family='"DejaVu Sans", sans-serif' font-size="21" fill="#000" font-weight="700" text-anchor="end" textLength="40" lengthAdjust="spacingAndGlyphs">600</text>
<line x1="2052.6" y1="1171.5" x2="2822" y2="1171.5" stroke="#62acd2" stroke-width="1.1" />
<text x="2023.2" y="1178.6" font-family='"DejaVu Sans", sans-serif' font-size="21" fill="#000" font-weight="700" text-anchor="end" textLength="40" lengthAdjust="spacingAndGlyphs">800</text>
<line x1="2052.6" y1="1091.9" x2="2822" y2="1091.9" stroke="#62acd2" stroke-width="1.1" />
<text x="2023.2" y="1099.0" font-family='"DejaVu Sans", sans-serif' font-size="21" fill="#000" font-weight="700" text-anchor="end" textLength="60.7" lengthAdjust="spacingAndGlyphs">1,000</text>
<line x1="2052.6" y1="1012.4" x2="2822" y2="1012.4" stroke="#62acd2" stroke-width="1.1" />
<text x="2023.2" y="1019.5" font-family='"DejaVu Sans", sans-serif' font-size="21" fill="#000" font-weight="700" text-anchor="end" textLength="60.7" lengthAdjust="spacingAndGlyphs">1,200</text>
<line x1="2052.6" y1="932.9" x2="2822" y2="932.9" stroke="#62acd2" stroke-width="1.1" />
<text x="2023.2" y="940.0" font-family='"DejaVu Sans", sans-serif' font-size="21" fill="#000" font-weight="700" text-anchor="end" textLength="60.7" lengthAdjust="spacingAndGlyphs">1,400</text>
<line x1="2052.6" y1="853.4" x2="2822" y2="853.4" stroke="#62acd2" stroke-width="1.1" />
<text x="2023.2" y="860.5" font-family='"DejaVu Sans", sans-serif' font-size="21" fill="#000" font-weight="700" text-anchor="end" textLength="60.7" lengthAdjust="spacingAndGlyphs">1,600</text>
<text x="2129.4" y="1525.7" font-family='"DejaVu Sans", sans-serif' font-size="21" fill="#000" font-weight="700" text-anchor="middle" textLength="54.2" lengthAdjust="spacingAndGlyphs">2026</text>
<text x="2283.2" y="1525.7" font-family='"DejaVu Sans", sans-serif' font-size="21" fill="#000" font-weight="700" text-anchor="middle" textLength="54.2" lengthAdjust="spacingAndGlyphs">2027</text>
<text x="2437.0" y="1525.7" font-family='"DejaVu Sans", sans-serif' font-size="21" fill="#000" font-weight="700" text-anchor="middle" textLength="54.2" lengthAdjust="spacingAndGlyphs">2028</text>
<text x="2590.8" y="1525.7" font-family='"DejaVu Sans", sans-serif' font-size="21" fill="#000" font-weight="700" text-anchor="middle" textLength="54.2" lengthAdjust="spacingAndGlyphs">2029</text>
<text x="2744.6" y="1525.7" font-family='"DejaVu Sans", sans-serif' font-size="21" fill="#000" font-weight="700" text-anchor="middle" textLength="54.2" lengthAdjust="spacingAndGlyphs">2030</text>
<polyline points="2129.4,1489.6 2283.2,1489.6 2437.0,1489.6 2590.8,1489.6 2744.6,1489.6" fill="none" stroke="#2fb3a3" stroke-width="4.4" stroke-linejoin="round" stroke-linecap="round"/>
<rect x="2121.0" y="1481.2" width="16.8" height="16.8" fill="#2fb3a3"/>
<rect x="2274.8" y="1481.2" width="16.8" height="16.8" fill="#2fb3a3"/>
<rect x="2428.6" y="1481.2" width="16.8" height="16.8" fill="#2fb3a3"/>
<rect x="2582.4" y="1481.2" width="16.8" height="16.8" fill="#2fb3a3"/>
<rect x="2736.2" y="1481.2" width="16.8" height="16.8" fill="#2fb3a3"/>
<polyline points="2129.4,1465.7 2283.2,1449.0 2437.0,1427.6 2590.8,1400.9 2744.6,1369.1" fill="none" stroke="#f07e71" stroke-width="4.4" stroke-linejoin="round" stroke-linecap="round"/>
<path d="M2129.4 1457.2 L2138.0 1473.5 H2120.8 Z" fill="#f07e71"/>
<path d="M2283.2 1440.5 L2291.8 1456.8 H2274.6 Z" fill="#f07e71"/>
<path d="M2437.0 1419.1 L2445.6 1435.4 H2428.4 Z" fill="#f07e71"/>
<path d="M2590.8 1392.4 L2599.4 1408.7 H2582.2 Z" fill="#f07e71"/>
<path d="M2744.6 1360.6 L2753.2 1376.9 H2736.0 Z" fill="#f07e71"/>
<polyline points="2129.4,1410.1 2283.2,1346.8 2437.0,1259.8 2590.8,1146.8 2744.6,1006.9" fill="none" stroke="#4d51d3" stroke-width="4.4" stroke-linejoin="round" stroke-linecap="round"/>
<rect x="2121.0" y="1401.7" width="16.8" height="16.8" fill="#4d51d3"/>
<rect x="2274.8" y="1338.4" width="16.8" height="16.8" fill="#4d51d3"/>
<rect x="2428.6" y="1251.4" width="16.8" height="16.8" fill="#4d51d3"/>
<rect x="2582.4" y="1138.4" width="16.8" height="16.8" fill="#4d51d3"/>
<rect x="2736.2" y="998.5" width="16.8" height="16.8" fill="#4d51d3"/>
<polyline points="2129.4,1390.2 2283.2,1306.3 2437.0,1197.3 2590.8,1061.3 2744.6,897.1" fill="none" stroke="#4ab3e8" stroke-width="4.4" stroke-linejoin="round" stroke-linecap="round"/>
<circle cx="2129.4" cy="1390.2" r="7.2" fill="#4ab3e8"/>
<circle cx="2283.2" cy="1306.3" r="7.2" fill="#4ab3e8"/>
<circle cx="2437.0" cy="1197.3" r="7.2" fill="#4ab3e8"/>
<circle cx="2590.8" cy="1061.3" r="7.2" fill="#4ab3e8"/>
<circle cx="2744.6" cy="897.1" r="7.2" fill="#4ab3e8"/>
<rect x="82" y="1536.9" width="1742" height="42.1" fill="#4b50d2"/>
<rect x="1825" y="1536.9" width="998.5" height="42.1" fill="#4b50d2"/>
<text x="694" y="1571" font-family='"DejaVu Sans", sans-serif' font-size="34" fill="#fff" font-weight="700" textLength="519.5" lengthAdjust="spacingAndGlyphs">Revenue Depth ($'000) - 2026</text>
<text x="2039.4" y="1571" font-family='"DejaVu Sans", sans-serif' font-size="34" fill="#fff" font-weight="700" textLength="570" lengthAdjust="spacingAndGlyphs">Monthly Run-Rate ($'000) - 2026</text>
<rect x="2521" y="1579.5" width="302" height="28.5" fill="#fff36d" stroke="#d8d8d8" stroke-width="1.2"/>
<text x="2672.5" y="1601.5" font-family='"DejaVu Sans", sans-serif' font-size="21.5" fill="#111" font-weight="700" text-anchor="middle" textLength="55.5" lengthAdjust="spacingAndGlyphs">2026</text>
<line x1="82" y1="1620.5" x2="1563" y2="1620.5" stroke="#6fb2d6" stroke-width="1.1" />
<rect x="1608" y="1648" width="12.5" height="12.5" fill="#4ab3e8"/>
<text x="1627" y="1661" font-family='"DejaVu Sans", sans-serif' font-size="21" fill="#000" font-weight="700" textLength="118.5" lengthAdjust="spacingAndGlyphs">Buyer Side</text>
<clipPath id="clipbot"><rect x="53" y="1600" width="2807" height="70"/></clipPath>
<g clip-path="url(#clipbot)">
<rect x="2267" y="1661" width="80" height="20" fill="#fff" stroke="#555" stroke-width="1.6"/>
<rect x="2359.5" y="1661" width="80" height="20" fill="#fff" stroke="#555" stroke-width="1.6"/>
</g>
</g>
<g id="vscroll">
<rect x="2860" y="279" width="31" height="1391" fill="#0a0a0a"/>
<rect x="2862" y="282" width="28" height="1395" fill="#161616" rx="12"/>
<rect x="2870.3" y="305" width="11.7" height="561" fill="#9b9b9b" rx="5.8"/>
<path d="M2868.5 295.5 L2875.8 286 L2883.2 295.5 Q2875.8 297.5 2868.5 295.5Z" fill="#9b9b9b"/>
<path d="M2868.5 1653.5 L2875.8 1663 L2883.2 1653.5 Q2875.8 1651.5 2868.5 1653.5Z" fill="#9b9b9b"/>
</g>
<g id="tabs">
<rect x="11" y="1670" width="2880" height="48" fill="#0a0a0a"/>
<path d="M54 1686 L46.5 1693.2 L54 1700.5" fill="none" stroke="#e0e0e0" stroke-width="1.7"/>
<path d="M95.5 1686 L103 1693.2 L95.5 1700.5" fill="none" stroke="#e0e0e0" stroke-width="1.7"/>
<circle cx="139.3" cy="1692.7" r="2.3" fill="#e0e0e0"/>
<circle cx="146.3" cy="1692.7" r="2.3" fill="#e0e0e0"/>
<circle cx="153.3" cy="1692.7" r="2.3" fill="#e0e0e0"/>
<rect x="177" y="1676.5" width="88.5" height="35" fill="#fff066" rx="6"/>
<text x="221.25" y="1703.3" font-family='"DejaVu Sans Condensed", "DejaVu Sans", sans-serif' font-size="21" fill="#1a1a1a" text-anchor="middle">Payroll</text>
<rect x="279" y="1676.5" width="86.5" height="35" fill="#fff066" rx="6"/>
<text x="322.25" y="1703.3" font-family='"DejaVu Sans Condensed", "DejaVu Sans", sans-serif' font-size="21" fill="#1a1a1a" text-anchor="middle">CAPEX</text>
<line x1="272.25" y1="1682" x2="272.25" y2="1706" stroke="#5a5a5a" stroke-width="1.2" />
<rect x="379.5" y="1676.5" width="112.5" height="35" fill="#fff066" rx="6"/>
<text x="435.75" y="1703.3" font-family='"DejaVu Sans Condensed", "DejaVu Sans", sans-serif' font-size="21" fill="#1a1a1a" text-anchor="middle">CapTable</text>
<line x1="372.5" y1="1682" x2="372.5" y2="1706" stroke="#5a5a5a" stroke-width="1.2" />
<rect x="505.5" y="1676.5" width="89.0" height="35" fill="#fff066" rx="6"/>
<text x="550.0" y="1703.3" font-family='"DejaVu Sans Condensed", "DejaVu Sans", sans-serif' font-size="21" fill="#1a1a1a" text-anchor="middle">Capital</text>
<line x1="498.75" y1="1682" x2="498.75" y2="1706" stroke="#5a5a5a" stroke-width="1.2" />
<rect x="608" y="1676.5" width="42" height="35" fill="#4ab3e8" rx="6"/>
<text x="629.0" y="1703.3" font-family='"DejaVu Sans Condensed", "DejaVu Sans", sans-serif' font-size="21" fill="#1a1a1a" text-anchor="middle">IS</text>
<line x1="601.25" y1="1682" x2="601.25" y2="1706" stroke="#5a5a5a" stroke-width="1.2" />
<rect x="663" y="1676.5" width="47.5" height="35" fill="#4ab3e8" rx="6"/>
<text x="686.75" y="1703.3" font-family='"DejaVu Sans Condensed", "DejaVu Sans", sans-serif' font-size="21" fill="#1a1a1a" text-anchor="middle">CF</text>
<line x1="656.5" y1="1682" x2="656.5" y2="1706" stroke="#5a5a5a" stroke-width="1.2" />
<rect x="724" y="1676.5" width="48" height="35" fill="#4ab3e8" rx="6"/>
<text x="748.0" y="1703.3" font-family='"DejaVu Sans Condensed", "DejaVu Sans", sans-serif' font-size="21" fill="#1a1a1a" text-anchor="middle">BS</text>
<line x1="717.25" y1="1682" x2="717.25" y2="1706" stroke="#5a5a5a" stroke-width="1.2" />
<rect x="785" y="1676.5" width="114.5" height="35" fill="#4ab3e8" rx="6"/>
<text x="842.25" y="1703.3" font-family='"DejaVu Sans Condensed", "DejaVu Sans", sans-serif' font-size="21" fill="#1a1a1a" text-anchor="middle">Scenarios</text>
<line x1="778.5" y1="1682" x2="778.5" y2="1706" stroke="#5a5a5a" stroke-width="1.2" />
<rect x="913" y="1676.5" width="114.5" height="35" fill="#4ab3e8" rx="6"/>
<text x="970.25" y="1703.3" font-family='"DejaVu Sans Condensed", "DejaVu Sans", sans-serif' font-size="21" fill="#1a1a1a" text-anchor="middle">Valuation</text>
<line x1="906.25" y1="1682" x2="906.25" y2="1706" stroke="#5a5a5a" stroke-width="1.2" />
<rect x="1041" y="1676.5" width="114" height="35" fill="#4ab3e8" rx="6"/>
<text x="1098.0" y="1703.3" font-family='"DejaVu Sans Condensed", "DejaVu Sans", sans-serif' font-size="21" fill="#1a1a1a" text-anchor="middle">Summary</text>
<line x1="1034.25" y1="1682" x2="1034.25" y2="1706" stroke="#5a5a5a" stroke-width="1.2" />
<rect x="1168" y="1676.5" width="48" height="35" fill="#4ab3e8" rx="6"/>
<text x="1192.0" y="1703.3" font-family='"DejaVu Sans Condensed", "DejaVu Sans", sans-serif' font-size="21" fill="#1a1a1a" text-anchor="middle">BE</text>
<line x1="1161.5" y1="1682" x2="1161.5" y2="1706" stroke="#5a5a5a" stroke-width="1.2" />
<rect x="1229.5" y="1676.5" width="71.0" height="35" fill="#4ab3e8" rx="6"/>
<text x="1265.0" y="1703.3" font-family='"DejaVu Sans Condensed", "DejaVu Sans", sans-serif' font-size="21" fill="#1a1a1a" text-anchor="middle">ROIC</text>
<line x1="1222.75" y1="1682" x2="1222.75" y2="1706" stroke="#5a5a5a" stroke-width="1.2" />
<rect x="1314" y="1676.5" width="84.5" height="35" fill="#4ab3e8" rx="6"/>
<text x="1356.25" y="1703.3" font-family='"DejaVu Sans Condensed", "DejaVu Sans", sans-serif' font-size="21" fill="#1a1a1a" text-anchor="middle">Charts</text>
<line x1="1307.25" y1="1682" x2="1307.25" y2="1706" stroke="#5a5a5a" stroke-width="1.2" />
<rect x="1412" y="1676.5" width="64" height="35" fill="#4ab3e8" rx="6"/>
<text x="1444.0" y="1703.3" font-family='"DejaVu Sans Condensed", "DejaVu Sans", sans-serif' font-size="21" fill="#1a1a1a" text-anchor="middle">KPIs</text>
<line x1="1405.25" y1="1682" x2="1405.25" y2="1706" stroke="#5a5a5a" stroke-width="1.2" />
<rect x="1489" y="1676.5" width="168.5" height="35" fill="#4ab3e8" rx="6"/>
<text x="1573.25" y="1703.3" font-family='"DejaVu Sans Condensed", "DejaVu Sans", sans-serif' font-size="21" fill="#1a1a1a" text-anchor="middle">Sources &amp; Uses</text>
<line x1="1482.5" y1="1682" x2="1482.5" y2="1706" stroke="#5a5a5a" stroke-width="1.2" />
<rect x="1671" y="1676.5" width="82.5" height="35" fill="#4ab3e8" rx="6"/>
<text x="1712.25" y="1703.3" font-family='"DejaVu Sans Condensed", "DejaVu Sans", sans-serif' font-size="21" fill="#1a1a1a" text-anchor="middle">Ratios</text>
<line x1="1664.25" y1="1682" x2="1664.25" y2="1706" stroke="#5a5a5a" stroke-width="1.2" />
<rect x="1767" y="1676.5" width="96" height="35" fill="#4ab3e8" rx="6"/>
<text x="1815.0" y="1703.3" font-family='"DejaVu Sans Condensed", "DejaVu Sans", sans-serif' font-size="21" fill="#1a1a1a" text-anchor="middle">DuPont</text>
<line x1="1760.25" y1="1682" x2="1760.25" y2="1706" stroke="#5a5a5a" stroke-width="1.2" />
<defs><linearGradient id="act" x1="0" y1="0" x2="0" y2="1"><stop offset="0" stop-color="#ffffff"/><stop offset="1" stop-color="#dff0fb"/></linearGradient></defs>
<path d="M1870 1670 Q1877 1670 1877 1677 V1707 Q1877 1713 1883 1713 H2020 Q2026 1713 2026 1707 V1677 Q2026 1670 2033 1670 Z" fill="url(#act)"/>
<text x="1951.5" y="1697.6" font-family='"DejaVu Sans Condensed", "DejaVu Sans", sans-serif' font-size="21" fill="#1c1c1c" text-anchor="middle" textLength="127" lengthAdjust="spacingAndGlyphs" stroke="#1c1c1c" stroke-width="0.35">Top_Revenue</text>
<rect x="1888" y="1705.3" width="127" height="2.8" fill="#1e7b45"/>
<line x1="1870" y1="1682" x2="1870" y2="1706" stroke="#5a5a5a" stroke-width="1.2" />
<line x1="2032.5" y1="1682" x2="2032.5" y2="1706" stroke="#5a5a5a" stroke-width="1.2" />
<clipPath id="cliptab"><rect x="2039.5" y="1670" width="32.5" height="48"/></clipPath>
<g clip-path="url(#cliptab)">
<rect x="2039.5" y="1676.5" width="100" height="35" fill="#4ab3e8" rx="6"/>
<text x="2054.5" y="1703.3" font-family='"DejaVu Sans Condensed", "DejaVu Sans", sans-serif' font-size="21" fill="#1a1a1a">Top</text>
</g>
<circle cx="2089.6" cy="1693" r="2" fill="#e0e0e0"/>
<circle cx="2095.2" cy="1693" r="2" fill="#e0e0e0"/>
<circle cx="2100.7999999999997" cy="1693" r="2" fill="#e0e0e0"/>
<path d="M2134.5 1693.3 H2151 M2142.8 1685 V1701.5" fill="none" stroke="#e0e0e0" stroke-width="1.6"/>
<circle cx="2191.8" cy="1687.5" r="1.6" fill="#e0e0e0"/>
<circle cx="2191.8" cy="1693.5" r="1.6" fill="#e0e0e0"/>
<circle cx="2191.8" cy="1699.5" r="1.6" fill="#e0e0e0"/>
<rect x="2216" y="1680" width="642.5" height="26" fill="#161616" rx="13"/>
<path d="M2233.5 1686.5 L2224 1693.3 L2233.5 1700 Q2235 1693.3 2233.5 1686.5Z" fill="#9b9b9b"/>
<path d="M2841.5 1686.5 L2851 1693.3 L2841.5 1700 Q2840 1693.3 2841.5 1686.5Z" fill="#9b9b9b"/>
<rect x="2241.6" y="1687" width="512.5" height="12.4" fill="#9b9b9b" rx="6.2"/>
</g>
<g id="status">
<rect x="11" y="1718" width="2880" height="33" fill="#141414"/>
<line x1="11" y1="1718.3" x2="2891" y2="1718.3" stroke="#363636" stroke-width="1.2" />
<text x="27" y="1741.3" font-family='"Liberation Sans", sans-serif' font-size="16.3" fill="#e6e6e6" textLength="42.5" lengthAdjust="spacingAndGlyphs">Ready</text>
<path d="M100.5 1727 H120.5 M100.5 1727 V1743.5 H107 M120.5 1727 V1731 M100.5 1731.5 H120.5 M104 1735.5 H108 M104 1739.5 H107" fill="none" stroke="#e0e0e0" stroke-width="1.4"/>
<circle cx="114.5" cy="1738.5" r="5.3" fill="none" stroke="#e0e0e0" stroke-width="1.4"/>
<circle cx="114.5" cy="1738.5" r="1.8" fill="#e0e0e0"/>
<circle cx="156" cy="1728" r="2.6" fill="none" stroke="#e0e0e0" stroke-width="1.4"/>
<path d="M147.5 1732 L153.5 1734 V1739 L149.5 1747 M164.5 1732 L158.5 1734 V1738 M153.5 1734 H158.5" fill="none" stroke="#e0e0e0" stroke-width="1.4" stroke-linejoin="round" stroke-linecap="round"/>
<path d="M158 1739.5 L166 1747.5 M166 1739.5 L158 1747.5" fill="none" stroke="#e0e0e0" stroke-width="1.5"/>
<text x="173.3" y="1741.3" font-family='"Liberation Sans", sans-serif' font-size="16.6" fill="#f4f4f4" font-weight="700" textLength="187.5" lengthAdjust="spacingAndGlyphs">Accessibility: Investigate</text>
<rect x="2445" y="1719" width="60" height="31" fill="#222"/>
<rect x="2464.5" y="1725" width="19" height="18" fill="none" stroke="#e0e0e0" stroke-width="1.4"/>
<line x1="2470.8333333333335" y1="1725" x2="2470.8333333333335" y2="1743" stroke="#e0e0e0" stroke-width="1.3" />
<line x1="2464.5" y1="1731.0" x2="2483.5" y2="1731.0" stroke="#e0e0e0" stroke-width="1.3" />
<line x1="2477.1666666666665" y1="1725" x2="2477.1666666666665" y2="1743" stroke="#e0e0e0" stroke-width="1.3" />
<line x1="2464.5" y1="1737.0" x2="2483.5" y2="1737.0" stroke="#e0e0e0" stroke-width="1.3" />
<rect x="2524.5" y="1725" width="20" height="18.5" fill="none" stroke="#e0e0e0" stroke-width="1.5"/>
<rect x="2529.5" y="1728.5" width="10" height="12" fill="none" stroke="#e0e0e0" stroke-width="1.2"/>
<line x1="2531.5" y1="1732" x2="2537.5" y2="1732" stroke="#e0e0e0" stroke-width="1.1" />
<line x1="2531.5" y1="1734.5" x2="2537.5" y2="1734.5" stroke="#e0e0e0" stroke-width="1.1" />
<line x1="2531.5" y1="1737" x2="2537.5" y2="1737" stroke="#e0e0e0" stroke-width="1.1" />
<path d="M2584.5 1725 H2605 V1743 H2584.5 Z M2584.5 1735 H2605 M2591 1725 V1735 M2598 1725 V1735" fill="none" stroke="#e0e0e0" stroke-width="1.5"/>
<line x1="2633.5" y1="1734.8" x2="2644" y2="1734.8" stroke="#e0e0e0" stroke-width="1.3" />
<line x1="2652.7" y1="1734.8" x2="2801" y2="1734.8" stroke="#e0e0e0" stroke-width="1.3" />
<line x1="2726.7" y1="1730.5" x2="2726.7" y2="1739" stroke="#e0e0e0" stroke-width="1.3" />
<rect x="2733" y="1726" width="8" height="17.5" fill="#b5b5b5" rx="1"/>
<path d="M2809 1734.8 H2820 M2814.5 1729.3 V1740.3" fill="none" stroke="#e0e0e0" stroke-width="1.3"/>
<text x="2840" y="1741.3" font-family='"Liberation Sans", sans-serif' font-size="16.3" fill="#e6e6e6" textLength="38.5" lengthAdjust="spacingAndGlyphs">140%</text>
</g>
</svg>
</body></html>
